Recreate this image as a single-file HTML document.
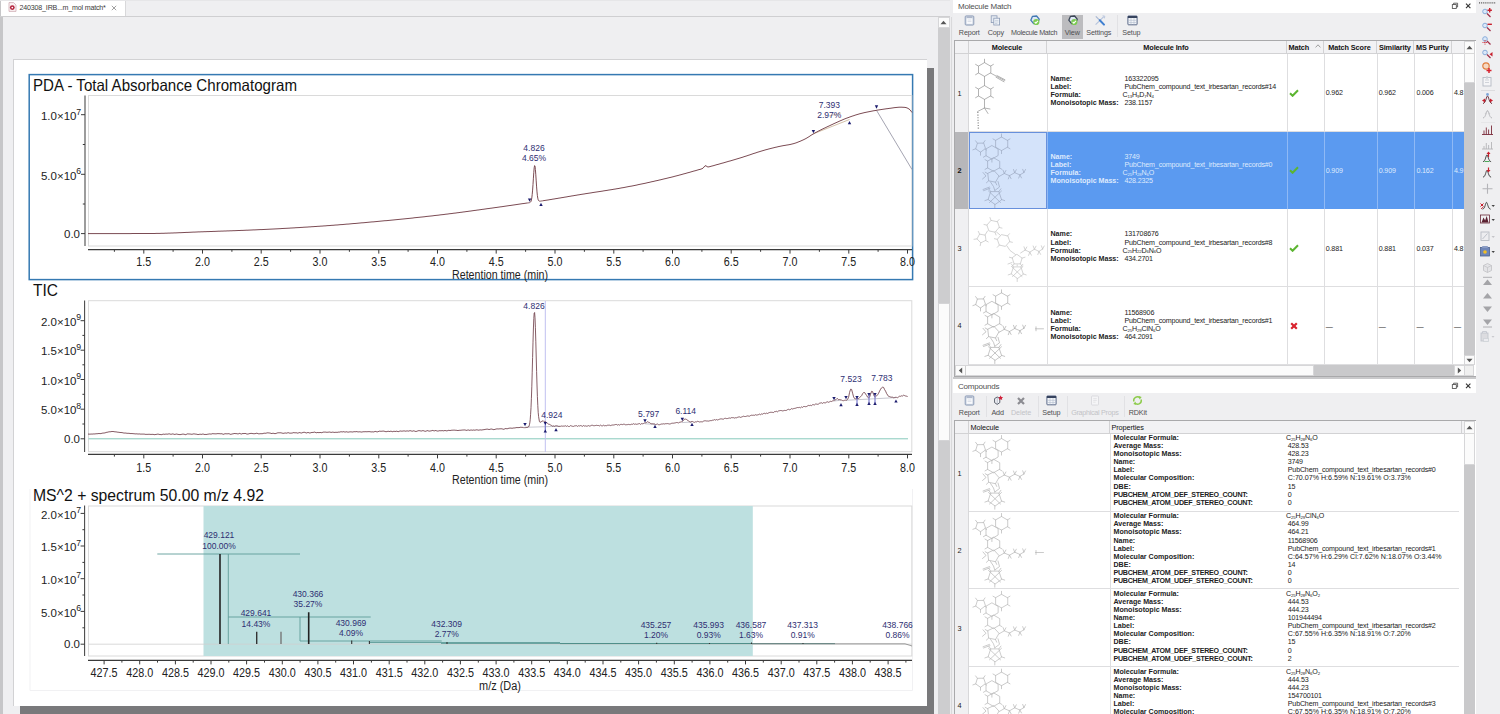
<!DOCTYPE html>
<html lang="en"><head><meta charset="utf-8"><title>Molecule Match</title>
<style>
html,body{margin:0;padding:0;background:#efeff1}
#root{position:relative;width:1500px;height:714px;overflow:hidden;background:#efeff1;font-family:"Liberation Sans",sans-serif;color:#222}
#root div{box-sizing:border-box}
.ptitle{position:absolute;background:#fff;font-size:8px;color:#505050;white-space:nowrap;line-height:9px;letter-spacing:-0.2px}
.tbar{position:absolute;background:#efeff1}
.tl{position:absolute;font-size:7.2px;text-align:center;white-space:nowrap;line-height:8px;letter-spacing:-0.12px}
.tsep{position:absolute;width:1px;background:#e1e1e4}
.tbl{position:absolute;background:#fff;border:1px solid #a9a9ab;overflow:hidden}
.hdr{position:absolute;background:#f2f2f4;border-bottom:1px solid #d2d2d4}
.hc{position:absolute;top:0;height:12.9px;font-size:7.3px;line-height:13.6px;white-space:nowrap;border-right:1px solid #d2d2d4;color:#111;letter-spacing:-0.1px;overflow:hidden}
.b{font-weight:bold}
.row{position:absolute;left:0;width:510px;border-bottom:1px solid #dedee0;background:#fff}
.row.sel{background:#5b9af0;color:#dfeafd;border-bottom-color:#5b9af0}
.rh{position:absolute;left:0;top:0;width:14px;background:#f0f0f2;border-right:1px solid #d8d8da;font-size:7.3px;text-align:left;padding-left:3px;color:#222}
.row.sel .rh{background:#b7b7ba;color:#111}
.molc{position:absolute;left:14px;top:0;width:78px}
.row.sel .molc{background:#d4e3fa;border:1px solid #6790dc;top:0.5px}
.vl{position:absolute;top:0;width:1px;background:#dedee0}
.row.sel .vl{background:#8fb9f5}
.il{position:absolute;font-size:7.1px;line-height:8.6px;white-space:nowrap;letter-spacing:-0.17px}
.il.b{letter-spacing:0}
.il.u{letter-spacing:-0.26px}
.il.w{letter-spacing:0}
.il sub{font-size:4.3px;vertical-align:baseline;position:relative;top:0.8px;letter-spacing:-0.1px}
.sb{position:absolute;background:#c9c9cb}
.sbw{position:absolute;background:#fbfbfb;border:1px solid #d6d6d8}
</style></head>
<body>
<div id="root">
<!-- left document area -->
<div style="position:absolute;left:0;top:0;width:2.6px;height:714px;background:#c6c6c8"></div>
<div style="position:absolute;left:0;top:16px;width:950px;height:1px;background:#cfcfd1"></div>
<div style="position:absolute;left:0;top:0;width:950px;height:1.2px;background:#e6e6e8"></div>
<div style="position:absolute;left:1px;top:1.2px;width:125px;height:15px;background:#fff;border-right:1px solid #d8d8da"></div>
<svg style="position:absolute;left:8px;top:1.5px" width="9" height="10" viewBox="0 0 9 10"><path d="M1 0.6h4.6l2.4 2.4v6.4h-7z" fill="#fbf3f4" stroke="#c9a2aa" stroke-width="0.7"/><circle cx="4.3" cy="5.6" r="2.4" fill="#b3203a"/><circle cx="4.3" cy="5.6" r="0.9" fill="#fff"/></svg>
<div style="position:absolute;left:19.5px;top:4.1px;font-size:7.1px;line-height:8px;color:#3a3a3a;white-space:nowrap;letter-spacing:-0.18px">240308_IRB...m_mol match*</div>
<svg style="position:absolute;left:110.5px;top:4.8px" width="6" height="6" viewBox="0 0 6 6"><path d="M0.8 0.8l4.4 4.4M5.2 0.8l-4.4 4.4" stroke="#888" stroke-width="0.8"/></svg>
<div style="position:absolute;left:20px;top:68px;width:913.5px;height:646px;background:#79797b"></div>
<div style="position:absolute;left:12.6px;top:58.6px;width:914.9px;height:647.4px;background:#fff;border-left:1px solid #d2d2d4;border-top:1px solid #d2d2d4"></div>
<svg id="plots" width="940" height="714" viewBox="0 0 940 714" style="position:absolute;left:0;top:0" font-family="'Liberation Sans',sans-serif">
<rect x="29.2" y="74.6" width="883.4" height="205" fill="#fff" stroke="#3579b2" stroke-width="1.5"/>
<text x="33" y="91.3" font-size="16.5" text-anchor="start" fill="#111" textLength="264" lengthAdjust="spacingAndGlyphs">PDA - Total Absorbance Chromatogram</text>
<rect x="88.5" y="95.5" width="823.3" height="150.5" fill="#fff" stroke="#dadada" stroke-width="1"/>
<path d="M85 95.4V246" stroke="#444" stroke-width="1.05"/>
<path d="M85 144.5h-2.2M85 204h-2.2M85 114.7h-4M85 174.3h-4M85 233.6h-4" stroke="#3a3a3a" stroke-width="1"/>
<text x="81.1" y="120" font-size="11.5" text-anchor="end" fill="#222">1.0×10<tspan font-size="8.7" dy="-5.4" dx="-0.2">7</tspan></text>
<text x="81.1" y="179.5" font-size="11.5" text-anchor="end" fill="#222">5.0×10<tspan font-size="8.7" dy="-5.4" dx="-0.2">6</tspan></text>
<text x="80" y="237.6" font-size="11.5" text-anchor="end" fill="#222" >0.0</text>
<path d="M88 249.6H912" stroke="#3a3a3a" stroke-width="1.2"/>
<path d="M114.4 249.6v2.2M173.1 249.6v2.2M231.9 249.6v2.2M290.6 249.6v2.2M349.4 249.6v2.2M408.1 249.6v2.2M466.9 249.6v2.2M525.6 249.6v2.2M584.4 249.6v2.2M643.1 249.6v2.2M701.9 249.6v2.2M760.6 249.6v2.2M819.4 249.6v2.2M878.1 249.6v2.2M143.8 249.6v4M202.5 249.6v4M261.2 249.6v4M320 249.6v4M378.8 249.6v4M437.5 249.6v4M496.2 249.6v4M555 249.6v4M613.8 249.6v4M672.5 249.6v4M731.2 249.6v4M790 249.6v4M848.8 249.6v4M907.5 249.6v4" stroke="#3a3a3a" stroke-width="1"/>
<text x="143.8" y="266.3" font-size="12.5" text-anchor="middle" fill="#222" textLength="14.9" lengthAdjust="spacingAndGlyphs">1.5</text>
<text x="202.5" y="266.3" font-size="12.5" text-anchor="middle" fill="#222" textLength="14.9" lengthAdjust="spacingAndGlyphs">2.0</text>
<text x="261.2" y="266.3" font-size="12.5" text-anchor="middle" fill="#222" textLength="14.9" lengthAdjust="spacingAndGlyphs">2.5</text>
<text x="320" y="266.3" font-size="12.5" text-anchor="middle" fill="#222" textLength="14.9" lengthAdjust="spacingAndGlyphs">3.0</text>
<text x="378.8" y="266.3" font-size="12.5" text-anchor="middle" fill="#222" textLength="14.9" lengthAdjust="spacingAndGlyphs">3.5</text>
<text x="437.5" y="266.3" font-size="12.5" text-anchor="middle" fill="#222" textLength="14.9" lengthAdjust="spacingAndGlyphs">4.0</text>
<text x="496.2" y="266.3" font-size="12.5" text-anchor="middle" fill="#222" textLength="14.9" lengthAdjust="spacingAndGlyphs">4.5</text>
<text x="555" y="266.3" font-size="12.5" text-anchor="middle" fill="#222" textLength="14.9" lengthAdjust="spacingAndGlyphs">5.0</text>
<text x="613.8" y="266.3" font-size="12.5" text-anchor="middle" fill="#222" textLength="14.9" lengthAdjust="spacingAndGlyphs">5.5</text>
<text x="672.5" y="266.3" font-size="12.5" text-anchor="middle" fill="#222" textLength="14.9" lengthAdjust="spacingAndGlyphs">6.0</text>
<text x="731.2" y="266.3" font-size="12.5" text-anchor="middle" fill="#222" textLength="14.9" lengthAdjust="spacingAndGlyphs">6.5</text>
<text x="790" y="266.3" font-size="12.5" text-anchor="middle" fill="#222" textLength="14.9" lengthAdjust="spacingAndGlyphs">7.0</text>
<text x="848.8" y="266.3" font-size="12.5" text-anchor="middle" fill="#222" textLength="14.9" lengthAdjust="spacingAndGlyphs">7.5</text>
<text x="907.5" y="266.3" font-size="12.5" text-anchor="middle" fill="#222" textLength="14.9" lengthAdjust="spacingAndGlyphs">8.0</text>
<text x="500" y="278.6" font-size="12.5" text-anchor="middle" fill="#222" textLength="96" lengthAdjust="spacingAndGlyphs">Retention time (min)</text>
<path d="M876.5 110.3L912 169.5" stroke="#9a9aa8" stroke-width="0.9" fill="none"/>
<path d="M813.4 133.8L849.5 119.5" stroke="#c8b090" stroke-width="0.8" fill="none"/>
<path d="M88 233.6L89 233.6L90 233.6L91 233.6L92 233.6L93 233.6L94 233.6L95 233.6L96 233.6L97 233.6L98 233.6L99 233.6L100 233.6L101 233.6L102 233.6L103 233.6L104 233.6L105 233.6L106 233.6L107 233.6L108 233.6L109 233.6L110 233.6L111 233.6L112 233.6L113 233.6L114 233.6L115 233.6L116 233.6L117 233.6L118 233.6L119 233.6L120 233.6L121 233.6L122 233.6L123 233.6L124 233.6L125 233.6L126 233.6L127 233.6L128 233.6L129 233.6L130 233.6L131 233.6L132 233.5L133 233.5L134 233.5L135 233.5L136 233.5L137 233.5L138 233.5L139 233.5L140 233.5L141 233.5L142 233.5L143 233.5L144 233.5L145 233.5L146 233.5L147 233.5L148 233.5L149 233.5L150 233.5L151 233.5L152 233.5L153 233.5L154 233.5L155 233.5L156 233.4L157 233.4L158 233.4L159 233.4L160 233.4L161 233.3L162 233.3L163 233.3L164 233.3L165 233.2L166 233.2L167 233.2L168 233.1L169 233.1L170 233.1L171 233L172 233L173 233L174 232.9L175 232.9L176 232.9L177 232.8L178 232.8L179 232.7L180 232.7L181 232.7L182 232.6L183 232.6L184 232.5L185 232.5L186 232.4L187 232.4L188 232.4L189 232.3L190 232.3L191 232.2L192 232.2L193 232.1L194 232.1L195 232.1L196 232L197 232L198 231.9L199 231.9L200 231.9L201 231.8L202 231.8L203 231.8L204 231.7L205 231.7L206 231.7L207 231.6L208 231.6L209 231.6L210 231.5L211 231.5L212 231.5L213 231.4L214 231.4L215 231.4L216 231.3L217 231.3L218 231.2L219 231.2L220 231.2L221 231.1L222 231.1L223 231.1L224 231L225 231L226 231L227 230.9L228 230.9L229 230.9L230 230.8L231 230.8L232 230.8L233 230.7L234 230.7L235 230.7L236 230.6L237 230.6L238 230.5L239 230.5L240 230.5L241 230.4L242 230.4L243 230.4L244 230.3L245 230.3L246 230.2L247 230.2L248 230.2L249 230.1L250 230.1L251 230L252 230L253 229.9L254 229.9L255 229.9L256 229.8L257 229.8L258 229.7L259 229.7L260 229.6L261 229.6L262 229.6L263 229.5L264 229.5L265 229.4L266 229.4L267 229.3L268 229.3L269 229.2L270 229.2L271 229.1L272 229.1L273 229L274 229L275 228.9L276 228.9L277 228.8L278 228.8L279 228.7L280 228.7L281 228.6L282 228.5L283 228.5L284 228.4L285 228.4L286 228.3L287 228.3L288 228.2L289 228.2L290 228.1L291 228L292 228L293 227.9L294 227.9L295 227.8L296 227.7L297 227.7L298 227.6L299 227.6L300 227.5L301 227.4L302 227.4L303 227.3L304 227.2L305 227.2L306 227.1L307 227.1L308 227L309 226.9L310 226.9L311 226.8L312 226.7L313 226.7L314 226.6L315 226.5L316 226.5L317 226.4L318 226.3L319 226.3L320 226.2L321 226.1L322 226.1L323 226L324 225.9L325 225.9L326 225.8L327 225.7L328 225.6L329 225.6L330 225.5L331 225.4L332 225.3L333 225.3L334 225.2L335 225.1L336 225L337 225L338 224.9L339 224.8L340 224.7L341 224.6L342 224.6L343 224.5L344 224.4L345 224.3L346 224.2L347 224.1L348 224.1L349 224L350 223.9L351 223.8L352 223.7L353 223.6L354 223.5L355 223.5L356 223.4L357 223.3L358 223.2L359 223.1L360 223L361 222.9L362 222.8L363 222.8L364 222.7L365 222.6L366 222.5L367 222.4L368 222.3L369 222.2L370 222.1L371 222L372 221.9L373 221.9L374 221.8L375 221.7L376 221.6L377 221.5L378 221.4L379 221.3L380 221.2L381 221.1L382 221L383 220.9L384 220.8L385 220.7L386 220.7L387 220.6L388 220.5L389 220.4L390 220.3L391 220.2L392 220.1L393 220L394 219.9L395 219.8L396 219.7L397 219.6L398 219.5L399 219.4L400 219.3L401 219.2L402 219.1L403 219L404 218.9L405 218.8L406 218.7L407 218.6L408 218.5L409 218.4L410 218.3L411 218.2L412 218.1L413 218L414 217.8L415 217.7L416 217.6L417 217.5L418 217.4L419 217.3L420 217.2L421 217.1L422 217L423 216.9L424 216.8L425 216.7L426 216.5L427 216.4L428 216.3L429 216.2L430 216.1L431 216L432 215.9L433 215.8L434 215.6L435 215.5L436 215.4L437 215.3L438 215.2L439 215.1L440 214.9L441 214.8L442 214.7L443 214.6L444 214.5L445 214.3L446 214.2L447 214.1L448 214L449 213.8L450 213.7L451 213.6L452 213.5L453 213.3L454 213.2L455 213.1L456 213L457 212.8L458 212.7L459 212.6L460 212.4L461 212.3L462 212.2L463 212L464 211.9L465 211.8L466 211.6L467 211.5L468 211.4L469 211.2L470 211.1L471 211L472 210.8L473 210.7L474 210.5L475 210.4L476 210.3L477 210.1L478 210L479 209.9L480 209.7L481 209.6L482 209.4L483 209.3L484 209.2L485 209L486 208.9L487 208.7L488 208.6L489 208.5L490 208.3L491 208.2L492 208.1L493 207.9L494 207.8L495 207.6L496 207.5L497 207.4L498 207.2L499 207.1L500 206.9L501 206.8L502 206.7L503 206.5L504 206.4L505 206.2L506 206.1L507 205.9L508 205.8L509 205.6L510 205.5L511 205.4L512 205.2L513 205.1L514 204.9L515 204.8L516 204.6L517 204.5L518 204.3L519 204.2L520 204L521 203.9L522 203.7L523 203.6L524 203.5L525 203.3L526 203.2L527 203L527.4 203L527.8 202.9L528.2 202.9L528.6 202.8L529 202.7L529.4 202.7L529.8 202.5L530.2 202.3L530.6 202L531 201.3L531.4 200L531.8 197.9L532.2 194.6L532.6 190.1L533 184.5L533.4 178.2L533.8 172.3L534.2 167.7L534.6 165.6L535 166.2L535.4 169.6L535.8 174.8L536.2 180.9L536.6 186.9L537 191.9L537.4 195.7L537.8 198.2L538.2 199.8L538.6 200.6L539 201L539.4 201.1L539.8 201.2L540.2 201.2L540.6 201.1L541 201L541.4 201L541.8 200.9L542.2 200.9L542.6 200.8L543 200.7L544 200.6L545 200.4L546 200.3L547 200.1L548 200L549 199.8L550 199.6L551 199.5L552 199.3L553 199.1L554 199L555 198.8L556 198.6L557 198.5L558 198.3L559 198.1L560 198L561 197.8L562 197.6L563 197.5L564 197.3L565 197.1L566 197L567 196.8L568 196.6L569 196.4L570 196.3L571 196.1L572 195.9L573 195.8L574 195.6L575 195.4L576 195.3L577 195.1L578 194.9L579 194.8L580 194.6L581 194.4L582 194.3L583 194.1L584 194L585 193.8L586 193.6L587 193.5L588 193.3L589 193.2L590 193L591 192.9L592 192.7L593 192.5L594 192.4L595 192.2L596 192.1L597 191.9L598 191.8L599 191.6L600 191.5L601 191.3L602 191.2L603 191L604 190.8L605 190.7L606 190.5L607 190.4L608 190.2L609 190L610 189.9L611 189.7L612 189.6L613 189.4L614 189.2L615 189.1L616 188.9L617 188.7L618 188.6L619 188.4L620 188.2L621 188L622 187.8L623 187.7L624 187.5L625 187.3L626 187.1L627 186.9L628 186.7L629 186.5L630 186.3L631 186.2L632 186L633 185.8L634 185.6L635 185.4L636 185.2L637 185L638 184.7L639 184.5L640 184.3L641 184.1L642 183.9L643 183.7L644 183.5L645 183.3L646 183.1L647 182.8L648 182.6L649 182.4L650 182.2L651 181.9L652 181.7L653 181.5L654 181.3L655 181L656 180.8L657 180.6L658 180.4L659 180.1L660 179.9L661 179.7L662 179.4L663 179.2L664 178.9L665 178.7L666 178.5L667 178.2L668 178L669 177.7L670 177.5L671 177.3L672 177L673 176.8L674 176.5L675 176.2L676 176L677 175.7L678 175.5L679 175.2L680 174.9L681 174.7L682 174.4L683 174.1L684 173.8L685 173.6L686 173.3L687 173L688 172.7L689 172.5L690 172.2L691 171.9L692 171.6L693 171.3L694 171L695 170.8L696 170.5L697 170.2L698 169.9L699 169.6L700 169.4L701 169.1L702 168.7L703 168.2L704 167L705 165.8L706 165.8L707 166.6L708 167L709 166.8L710 166.6L711 166.3L712 166L713 165.8L714 165.5L715 165.2L716 164.9L717 164.6L718 164.4L719 164.1L720 163.8L721 163.5L722 163.2L723 163L724 162.7L725 162.4L726 162.1L727 161.8L728 161.5L729 161.2L730 161L731 160.7L732 160.4L733 160.1L734 159.8L735 159.5L736 159.2L737 158.9L738 158.6L739 158.3L740 158L741 157.7L742 157.4L743 157.1L744 156.7L745 156.4L746 156.1L747 155.8L748 155.4L749 155.1L750 154.8L751 154.4L752 154.1L753 153.7L754 153.4L755 153.1L756 152.8L757 152.4L758 152.1L759 151.8L760 151.5L761 151.2L762 150.9L763 150.6L764 150.3L765 150L766 149.7L767 149.5L768 149.2L769 148.9L770 148.7L771 148.4L772 148.2L773 147.9L774 147.7L775 147.4L776 147.2L777 147L778 146.7L779 146.5L780 146.3L781 146.1L782 145.9L783 145.7L784 145.5L785 145.4L786 145.2L787 145L788 144.9L789 144.7L790 144.5L791 144.3L792 144L793 143.8L794 143.5L795 143.2L796 142.9L797 142.5L798 142.1L799 141.7L800 141.3L801 140.9L802 140.4L803 140L804 139.5L805 139L806 138.5L807 137.9L808 137.3L809 136.7L810 136L811 135.3L812 134.7L813 134.1L814 133.5L815 132.9L816 132.4L817 131.9L818 131.3L819 130.8L820 130.3L821 129.8L822 129.3L823 128.8L824 128.3L825 127.9L826 127.4L827 126.9L828 126.4L829 126L830 125.5L831 125L832 124.6L833 124.1L834 123.6L835 123.2L836 122.7L837 122.3L838 121.8L839 121.4L840 120.9L841 120.5L842 120.1L843 119.6L844 119.2L845 118.8L846 118.4L847 118L848 117.7L849 117.3L850 116.9L851 116.6L852 116.2L853 115.9L854 115.6L855 115.2L856 114.9L857 114.6L858 114.3L859 114L860 113.7L861 113.5L862 113.2L863 113L864 112.7L865 112.5L866 112.3L867 112.1L868 111.9L869 111.7L870 111.5L871 111.3L872 111.1L873 110.9L874 110.7L875 110.6L876 110.4L877 110.2L878 110L879 109.9L880 109.7L881 109.6L882 109.4L883 109.3L884 109.1L885 109L886 108.8L887 108.7L888 108.6L889 108.4L890 108.3L891 108.2L892 108L893 107.9L894 107.7L895 107.6L896 107.5L897 107.4L898 107.3L899 107.2L900 107.2L901 107.2L902 107.2L903 107.3L904 107.3L905 107.4L906 107.6L907 107.9L908 108.4L909 109L910 109.8L911 111.1L912 112.5" stroke="#74414a" stroke-width="0.95" fill="none" stroke-linejoin="round"/>
<path d="M841 113L829 116" stroke="#c8b090" stroke-width="0.7" fill="none"/>
<path d="M527.9 198.5h3.4L529.6 201.8z" fill="#1b1b6e"/>
<path d="M811.7 129.9h3.4L813.4 133.2z" fill="#1b1b6e"/>
<path d="M874.8 105.3h3.4L876.5 108.7z" fill="#1b1b6e"/>
<path d="M539.3 206h3.4L541 202.7z" fill="#1b1b6e"/>
<path d="M847.8 124.2h3.4L849.5 120.9z" fill="#1b1b6e"/>
<text x="534" y="151" font-size="8.5" text-anchor="middle" fill="#2e2e72" >4.826</text>
<text x="534" y="160.8" font-size="8.5" text-anchor="middle" fill="#2e2e72" >4.65%</text>
<text x="829.3" y="108.2" font-size="8.5" text-anchor="middle" fill="#2e2e72" >7.393</text>
<text x="829.3" y="118" font-size="8.5" text-anchor="middle" fill="#2e2e72" >2.97%</text>
<text x="33" y="296.2" font-size="16.5" text-anchor="start" fill="#111" textLength="25" lengthAdjust="spacingAndGlyphs">TIC</text>
<rect x="88.5" y="300.7" width="823.3" height="151" fill="#fff" stroke="#dadada" stroke-width="1"/>
<path d="M84.6 300.4V452" stroke="#444" stroke-width="1.05"/>
<path d="M84.6 335.4h-2.2M84.6 364.8h-2.2M84.6 394.3h-2.2M84.6 424h-2.2M84.6 320.7h-4M84.6 350.2h-4M84.6 379.5h-4M84.6 409.2h-4M84.6 438.8h-4" stroke="#3a3a3a" stroke-width="1"/>
<text x="81.1" y="325.8" font-size="11.5" text-anchor="end" fill="#222">2.0×10<tspan font-size="8.7" dy="-5.4" dx="-0.2">9</tspan></text>
<text x="81.1" y="355.3" font-size="11.5" text-anchor="end" fill="#222">1.5×10<tspan font-size="8.7" dy="-5.4" dx="-0.2">9</tspan></text>
<text x="81.1" y="384.6" font-size="11.5" text-anchor="end" fill="#222">1.0×10<tspan font-size="8.7" dy="-5.4" dx="-0.2">9</tspan></text>
<text x="81.1" y="414.3" font-size="11.5" text-anchor="end" fill="#222">5.0×10<tspan font-size="8.7" dy="-5.4" dx="-0.2">8</tspan></text>
<text x="80" y="442.8" font-size="11.5" text-anchor="end" fill="#222" >0.0</text>
<path d="M88 454.4H912" stroke="#3a3a3a" stroke-width="1.2"/>
<path d="M114.4 454.4v2.2M173.1 454.4v2.2M231.9 454.4v2.2M290.6 454.4v2.2M349.4 454.4v2.2M408.1 454.4v2.2M466.9 454.4v2.2M525.6 454.4v2.2M584.4 454.4v2.2M643.1 454.4v2.2M701.9 454.4v2.2M760.6 454.4v2.2M819.4 454.4v2.2M878.1 454.4v2.2M143.8 454.4v4M202.5 454.4v4M261.2 454.4v4M320 454.4v4M378.8 454.4v4M437.5 454.4v4M496.2 454.4v4M555 454.4v4M613.8 454.4v4M672.5 454.4v4M731.2 454.4v4M790 454.4v4M848.8 454.4v4M907.5 454.4v4" stroke="#3a3a3a" stroke-width="1"/>
<text x="143.8" y="471.7" font-size="12.5" text-anchor="middle" fill="#222" textLength="14.9" lengthAdjust="spacingAndGlyphs">1.5</text>
<text x="202.5" y="471.7" font-size="12.5" text-anchor="middle" fill="#222" textLength="14.9" lengthAdjust="spacingAndGlyphs">2.0</text>
<text x="261.2" y="471.7" font-size="12.5" text-anchor="middle" fill="#222" textLength="14.9" lengthAdjust="spacingAndGlyphs">2.5</text>
<text x="320" y="471.7" font-size="12.5" text-anchor="middle" fill="#222" textLength="14.9" lengthAdjust="spacingAndGlyphs">3.0</text>
<text x="378.8" y="471.7" font-size="12.5" text-anchor="middle" fill="#222" textLength="14.9" lengthAdjust="spacingAndGlyphs">3.5</text>
<text x="437.5" y="471.7" font-size="12.5" text-anchor="middle" fill="#222" textLength="14.9" lengthAdjust="spacingAndGlyphs">4.0</text>
<text x="496.2" y="471.7" font-size="12.5" text-anchor="middle" fill="#222" textLength="14.9" lengthAdjust="spacingAndGlyphs">4.5</text>
<text x="555" y="471.7" font-size="12.5" text-anchor="middle" fill="#222" textLength="14.9" lengthAdjust="spacingAndGlyphs">5.0</text>
<text x="613.8" y="471.7" font-size="12.5" text-anchor="middle" fill="#222" textLength="14.9" lengthAdjust="spacingAndGlyphs">5.5</text>
<text x="672.5" y="471.7" font-size="12.5" text-anchor="middle" fill="#222" textLength="14.9" lengthAdjust="spacingAndGlyphs">6.0</text>
<text x="731.2" y="471.7" font-size="12.5" text-anchor="middle" fill="#222" textLength="14.9" lengthAdjust="spacingAndGlyphs">6.5</text>
<text x="790" y="471.7" font-size="12.5" text-anchor="middle" fill="#222" textLength="14.9" lengthAdjust="spacingAndGlyphs">7.0</text>
<text x="848.8" y="471.7" font-size="12.5" text-anchor="middle" fill="#222" textLength="14.9" lengthAdjust="spacingAndGlyphs">7.5</text>
<text x="907.5" y="471.7" font-size="12.5" text-anchor="middle" fill="#222" textLength="14.9" lengthAdjust="spacingAndGlyphs">8.0</text>
<text x="500" y="484" font-size="12.5" text-anchor="middle" fill="#222" textLength="96" lengthAdjust="spacingAndGlyphs">Retention time (min)</text>
<path d="M88.5 438.8H908" stroke="#86c9bb" stroke-width="1"/>
<path d="M545.3 301V452" stroke="#c0c0f0" stroke-width="1"/>
<path d="M525 427.3L560 426.3M645 423.8L655 424.4M682 422.6L692 422M834 401L841 400.2M846 400.3L896 397.6" stroke="#b9b9c4" stroke-width="0.8" fill="none"/>
<path d="M88 434.1L89 434.1L90 434.2L91 434L92 434.1L93 434L94 433.9L95 434L96 433.7L97 433.8L98 433.6L99 433.5L100 433.6L101 433.6L102 433.2L103 433.1L104 433L105 432.9L106 432.5L107 432.2L108 432.2L109 431.7L110 431.9L111 431.6L112 431.5L113 431.5L114 431.6L115 431.9L116 431.8L117 432.1L118 432.2L119 432.3L120 432.5L121 432.5L122 432.6L123 432.8L124 433.1L125 433L126 433.1L127 433.3L128 433.3L129 433.3L130 433.5L131 433.6L132 433.5L133 433.7L134 433.7L135 433.9L136 433.9L137 433.8L138 434.1L139 433.9L140 434L141 434.2L142 434L143 434.2L144 434L145 434.3L146 434.4L147 434.3L148 434.4L149 434.2L150 434.4L151 434.4L152 434.4L153 434.3L154 434.6L155 434.7L156 434.3L157 434.4L158 433.9L159 434.5L160 434.4L161 434.7L162 434.6L163 434.1L164 434.2L165 434.4L166 433.9L167 434.3L168 434L169 433.9L170 433.9L171 434.5L172 433.9L173 434L174 434.2L175 434.6L176 433.9L177 434.2L178 434.3L179 434.6L180 434.5L181 434.6L182 434.1L183 434.2L184 434.1L185 434.6L186 434.7L187 433.9L188 433.9L189 434L190 434L191 434.2L192 434.3L193 434L194 433.8L195 434.1L196 434.1L197 434.3L198 434.6L199 434.4L200 434.2L201 434.3L202 434.4L203 433.8L204 434.5L205 434.4L206 434.5L207 434.4L208 434.1L209 434.1L210 433.8L211 434.3L212 433.7L213 433.7L214 433.8L215 433.8L216 433.9L217 433.7L218 433.6L219 433.7L220 433.7L221 433.9L222 433.6L223 434.4L224 434.1L225 433.7L226 433.8L227 433.8L228 433.8L229 433.6L230 434.2L231 434.4L232 433.9L233 433.9L234 433.5L235 433.5L236 433.7L237 433.6L238 434.1L239 433.5L240 433.3L241 434.2L242 433.8L243 433.4L244 433.7L245 433.3L246 433.7L247 434.1L248 434L249 433.8L250 433.4L251 433.5L252 433.3L253 433.8L254 433.6L255 433.8L256 433.3L257 433.2L258 433.7L259 433.9L260 433.7L261 433.7L262 433.7L263 433.6L264 433.1L265 433.3L266 433.2L267 432.9L268 432.8L269 433L270 433L271 433.4L272 433.6L273 433.1L274 433.5L275 433.6L276 433.5L277 433L278 432.8L279 432.8L280 432.8L281 432.8L282 433.1L283 433.3L284 433.3L285 432.9L286 433.1L287 433.2L288 432.5L289 433L290 433.2L291 433.1L292 433.1L293 432.8L294 432.5L295 433L296 432.6L297 433L298 433.2L299 432.6L300 432.6L301 433.1L302 432.9L303 432.4L304 432.3L305 432.3L306 433L307 432.9L308 432.3L309 432.9L310 433L311 432.7L312 432.4L313 432.5L314 432.2L315 432L316 432.9L317 432.6L318 432.4L319 432.8L320 432.3L321 432.7L322 432.7L323 432.1L324 432.1L325 432.1L326 432.1L327 432.4L328 432.1L329 432.2L330 431.9L331 432.6L332 432.1L333 432.2L334 432.3L335 432.5L336 432.1L337 432.5L338 432.1L339 432.1L340 432.1L341 431.6L342 432L343 431.8L344 431.6L345 432.3L346 431.7L347 431.9L348 432.2L349 432L350 431.8L351 431.9L352 431.9L353 432.1L354 431.5L355 431.9L356 431.6L357 431.6L358 432L359 431.8L360 431.8L361 432L362 432.1L363 431.7L364 431.8L365 431.7L366 431.7L367 431.8L368 431.6L369 431.7L370 431.6L371 432L372 431.8L373 431.9L374 432L375 431.3L376 431.6L377 431.9L378 431.8L379 431.2L380 431.1L381 431.4L382 431.1L383 431.2L384 431L385 431.6L386 431.6L387 431.7L388 431.1L389 431.5L390 431.5L391 431L392 431.7L393 431.7L394 431L395 431.7L396 431.2L397 431.2L398 431.7L399 431.5L400 430.9L401 431.1L402 431.2L403 431L404 430.9L405 431L406 431.3L407 430.7L408 431.2L409 431L410 430.6L411 430.9L412 431.2L413 431.1L414 430.6L415 431.5L416 431.3L417 431.4L418 430.6L419 430.8L420 430.6L421 431.2L422 430.8L423 430.6L424 430.9L425 431.3L426 431.2L427 430.7L428 430.6L429 431.3L430 430.9L431 431L432 430.5L433 430.4L434 431L435 430.7L436 430.4L437 431.2L438 430.9L439 431L440 430.4L441 431.1L442 430.3L443 431L444 430.7L445 430.5L446 430.7L447 431L448 430.4L449 430.3L450 430.6L451 430.3L452 430.2L453 430.2L454 430.1L455 430.2L456 430.3L457 430.3L458 430.7L459 430.2L460 430.4L461 430.1L462 430.2L463 429.9L464 430.1L465 429.8L466 430.4L467 430.3L468 429.9L469 430.1L470 430.5L471 429.7L472 430.4L473 430L474 430L475 430.3L476 429.8L477 429.9L478 430L479 430.3L480 429.7L481 430.1L482 429.9L483 429.8L484 429.6L485 429.5L486 429.2L487 429.2L488 429.1L489 429.7L490 429.2L491 429.1L492 429L493 429.6L494 429.6L495 429.4L496 429L497 428.9L498 428.9L499 429L500 428.7L501 428.9L502 428.7L503 429.3L504 429.2L505 428.8L506 428.4L507 429L508 428.4L509 428.3L510 428L511 428.2L512 428.2L513 428.2L514 427.8L515 428.1L516 427.5L517 427.7L518 427.5L519 427.7L520 427.3L521 427.2L522 427.4L523 427.3L523.4 427.6L523.8 427.5L524.2 427.7L524.6 427.6L525 427.6L525.4 427.7L525.8 427.3L526.2 427.2L526.6 427.7L527 427L527.4 427.4L527.8 427.2L528.2 426.5L528.6 426.9L529 426.2L529.4 424.8L529.8 422.9L530.2 419.8L530.6 414.3L531 407.7L531.4 398.3L531.8 386.8L532.2 372.8L532.6 357.6L533 342.2L533.4 329L533.8 318.5L534.2 313L534.6 312.5L535 317.6L535.4 327.7L535.8 341.2L536.2 356L536.6 371.6L537 385L537.4 396.6L537.8 405.6L538.2 412.3L538.6 416.6L539 419L539.4 421.4L539.8 422.1L540.2 422.2L540.6 422.2L541 422.2L541.4 421.4L541.8 421.8L542.2 421.2L542.6 420.8L543 420.9L543.4 421.3L543.8 420.8L544.2 421.3L544.6 421.7L545 421.4L545.4 421.5L545.8 421.8L546.2 422.3L546.6 422.7L547.6 423.4L548.6 424.2L549.6 424.4L550.6 425L551.6 425.5L552.6 426.2L553.6 425.9L554.6 426.3L555.6 425.8L556.6 425.8L557.6 426L558.6 426.4L559.6 426.4L560.6 426.3L561.6 426L562.6 426.2L563.6 426.1L564.6 426.1L565.6 425.8L566.6 426.4L567.6 425.8L568.6 426.5L569.6 426.4L570.6 425.6L571.6 426L572.6 426.3L573.6 426.4L574.6 425.9L575.6 425.8L576.6 425.7L577.6 426.4L578.6 425.7L579.6 426L580.6 425.6L581.6 425.9L582.6 426.3L583.6 425.5L584.6 426.1L585.6 425.9L586.6 426.2L587.6 426L588.6 425.6L589.6 426.1L590.6 425.8L591.6 425.3L592.6 425.3L593.6 425.7L594.6 425.7L595.6 425.5L596.6 425.3L597.6 425.5L598.6 425.5L599.6 425.9L600.6 425.1L601.6 425.8L602.6 425.8L603.6 425.2L604.6 425.8L605.6 425.6L606.6 425.7L607.6 425.2L608.6 425.2L609.6 425.2L610.6 425.6L611.6 425.2L612.6 425L613.6 425L614.6 424.8L615.6 424.5L616.6 424.5L617.6 425.1L618.6 424.6L619.6 425.1L620.6 424.4L621.6 424.4L622.6 424.6L623.6 424.2L624.6 424.3L625.6 424.8L626.6 424.7L627.6 424.6L628.6 424.4L629.6 424.6L630.6 424.6L631.6 424.2L632.6 424.3L633.6 423.7L634.6 424.3L635.6 424L636.6 424.3L637.6 424.1L638.6 423.8L639.6 423.6L640.6 424.4L641.6 423.6L642.6 423.8L643.6 423.5L644.6 423L645.6 422.8L646.6 422.5L647.6 421.7L648.6 422.3L649.6 422.6L650.6 423.5L651.6 423.8L652.6 423.8L653.6 423.9L654.6 424L655.6 424.6L656.6 424.3L657.6 424L658.6 424.7L659.6 424.7L660.6 424.3L661.6 424L662.6 424L663.6 423.8L664.6 424L665.6 423.7L666.6 423.7L667.6 423.6L668.6 423.8L669.6 424L670.6 423.8L671.6 423.3L672.6 423.2L673.6 423.2L674.6 423L675.6 422.8L676.6 422.5L677.6 422.6L678.6 423.1L679.6 422.1L680.6 422.1L681.6 421.8L682.6 421.3L683.6 419.9L684.6 419.3L685.6 419.1L686.6 419.5L687.6 420.1L688.6 421.2L689.6 421.7L690.6 422.1L691.6 421.5L692.6 421.5L693.6 422.1L694.6 422.3L695.6 421.8L696.6 421.9L697.6 421.3L698.6 421.6L699.6 422L700.6 421.8L701.6 421.8L702.6 421.8L703.6 421.1L704.6 420.8L705.6 420.8L706.6 421L707.6 421L708.6 421.1L709.6 420.8L710.6 420.6L711.6 420.6L712.6 420.2L713.6 420.1L714.6 419.6L715.6 420.1L716.6 419.5L717.6 420L718.6 419.6L719.6 419.2L720.6 418.9L721.6 418.9L722.6 419.1L723.6 419.1L724.6 418.4L725.6 418.3L726.6 418.6L727.6 418.5L728.6 418.2L729.6 418L730.6 418.2L731.6 417.6L732.6 417.7L733.6 417.7L734.6 418.1L735.6 417.7L736.6 417.8L737.6 417.3L738.6 417L739.6 416.9L740.6 417.4L741.6 417L742.6 416.6L743.6 416.2L744.6 416.5L745.6 416.5L746.6 416.2L747.6 415.9L748.6 416.1L749.6 416.2L750.6 415.5L751.6 415.2L752.6 415.3L753.6 415.2L754.6 415.3L755.6 414.7L756.6 415.1L757.6 414.9L758.6 414.6L759.6 414.1L760.6 414.7L761.6 413.9L762.6 414.2L763.6 413.5L764.6 413.3L765.6 413.7L766.6 413.1L767.6 413.5L768.6 412.9L769.6 412.5L770.6 412.3L771.6 412.3L772.6 412.4L773.6 412.5L774.6 411.6L775.6 411.6L776.6 411.3L777.6 411.8L778.6 410.9L779.6 410.7L780.6 410.5L781.6 410.6L782.6 410.9L783.6 410.7L784.6 410.4L785.6 410.5L786.6 410.3L787.6 409.6L788.6 409.3L789.6 409.8L790.6 409.4L791.6 408.6L792.6 409L793.6 408.6L794.6 408.4L795.6 408.2L796.6 407.8L797.6 407.5L798.6 407.6L799.6 407.4L800.6 407.8L801.6 406.9L802.6 407.4L803.6 406.5L804.6 406.5L805.6 406.7L806.6 406.5L807.6 405.9L808.6 405.4L809.6 405.6L810.6 405.3L811.6 405.6L812.6 404.7L813.6 404.7L814.6 404.9L815.6 404L816.6 404.1L817.6 404.3L818.6 404L819.6 403.2L820.6 403L821.6 402.8L822.6 403.4L823.6 402.6L824.6 402.8L825.6 402.8L826.6 402.1L827.6 401.8L828.6 402.3L829.6 401.8L830.6 401.3L831.6 401.5L832.6 400.9L833.6 400.7L834.6 400.1L835.6 399.9L836.6 398.8L837.6 398.6L838.6 399.8L839.6 399.5L840.6 399.8L841.6 400.1L842.6 400.6L843.6 400.7L844.6 400.3L845.6 400.2L846.6 400.2L847.6 399.4L848.6 397.2L849.6 392.3L850.6 389.2L851.6 389.4L852.6 393.2L853.6 396.9L854.6 398.6L855.6 398.8L856.6 398.7L857.6 398.6L858.6 398.7L859.6 397.5L860.6 396.7L861.6 395.7L862.6 393.7L863.6 392.5L864.6 392.5L865.6 394.1L866.6 395.4L867.6 397.2L868.6 397.7L869.6 397.2L870.6 394.2L871.6 391.3L872.6 391.6L873.6 394.7L874.6 396.8L875.6 396.8L876.6 395.9L877.6 394.8L878.6 393.2L879.6 391.1L880.6 389.2L881.6 387.8L882.6 387.2L883.6 387.4L884.6 389.6L885.6 391.2L886.6 393.5L887.6 395L888.6 396.4L889.6 396.6L890.6 397L891.6 397.2L892.6 397.2L893.6 397.8L894.6 397.6L895.6 397.3L896.6 397.4L897.6 397.7L898.6 396.9L899.6 396.2L900.6 396.3L901.6 395.8L902.6 396L903.6 395.2L904.6 395.6L905.6 396L906.6 396.2L907.6 396.5" stroke="#70404a" stroke-width="0.85" fill="none" stroke-linejoin="round"/>
<path d="M545.3 423V431M857 398V404M869 395V403M875 395V403" stroke="#7474cc" stroke-width="1.1"/>
<path d="M523.3 423.1h3.4L525 426.3z" fill="#1b1b6e"/>
<path d="M543.6 421.9h3.4L545.3 425.1z" fill="#1b1b6e"/>
<path d="M643.3 419.2h3.4L645 422.4z" fill="#1b1b6e"/>
<path d="M680.6 417.8h3.4L682.3 421z" fill="#1b1b6e"/>
<path d="M832.3 397.1h3.4L834 400.3z" fill="#1b1b6e"/>
<path d="M844.3 396.1h3.4L846 399.3z" fill="#1b1b6e"/>
<path d="M855.3 395.9h3.4L857 399.1z" fill="#1b1b6e"/>
<path d="M867.3 392.9h3.4L869 396.1z" fill="#1b1b6e"/>
<path d="M873.3 392.9h3.4L875 396.1z" fill="#1b1b6e"/>
<path d="M543.6 432.6h3.4L545.3 429.4z" fill="#1b1b6e"/>
<path d="M554.3 431.2h3.4L556 428z" fill="#1b1b6e"/>
<path d="M653.3 428h3.4L655 424.8z" fill="#1b1b6e"/>
<path d="M690.3 426h3.4L692 422.8z" fill="#1b1b6e"/>
<path d="M839.3 406.3h3.4L841 403.1z" fill="#1b1b6e"/>
<path d="M855.3 405.9h3.4L857 402.7z" fill="#1b1b6e"/>
<path d="M867.3 404.9h3.4L869 401.7z" fill="#1b1b6e"/>
<path d="M873.3 404.9h3.4L875 401.7z" fill="#1b1b6e"/>
<path d="M894.3 402.6h3.4L896 399.4z" fill="#1b1b6e"/>
<text x="534" y="309.3" font-size="8.5" text-anchor="middle" fill="#2e2e72" >4.826</text>
<text x="551.8" y="418" font-size="8.5" text-anchor="middle" fill="#2e2e72" >4.924</text>
<text x="648.7" y="416.6" font-size="8.5" text-anchor="middle" fill="#2e2e72" >5.797</text>
<text x="685.7" y="414.3" font-size="8.5" text-anchor="middle" fill="#2e2e72" >6.114</text>
<text x="851" y="382" font-size="8.5" text-anchor="middle" fill="#2e2e72" >7.523</text>
<text x="881.8" y="381.3" font-size="8.5" text-anchor="middle" fill="#2e2e72" >7.783</text>
<path d="M30 489V690.5H912.5V489" fill="none" stroke="#f1f1f3" stroke-width="1"/>
<text x="33" y="500.8" font-size="16.5" text-anchor="start" fill="#111" textLength="231" lengthAdjust="spacingAndGlyphs">MS^2 + spectrum 50.00 m/z 4.92</text>
<rect x="88.5" y="506" width="823.3" height="150" fill="#fff" stroke="#dadada" stroke-width="1"/>
<rect x="203.5" y="506" width="549.3" height="150" fill="#bde0e0"/>
<path d="M84.6 505.4V656" stroke="#444" stroke-width="1.05"/>
<path d="M84.6 529.7h-2.2M84.6 562.4h-2.2M84.6 595h-2.2M84.6 627.8h-2.2M84.6 513.4h-4M84.6 546h-4M84.6 578.7h-4M84.6 611.4h-4M84.6 644.2h-4" stroke="#3a3a3a" stroke-width="1"/>
<text x="81.1" y="518.5" font-size="11.5" text-anchor="end" fill="#222">2.0×10<tspan font-size="8.7" dy="-5.4" dx="-0.2">7</tspan></text>
<text x="81.1" y="551" font-size="11.5" text-anchor="end" fill="#222">1.5×10<tspan font-size="8.7" dy="-5.4" dx="-0.2">7</tspan></text>
<text x="81.1" y="583.8" font-size="11.5" text-anchor="end" fill="#222">1.0×10<tspan font-size="8.7" dy="-5.4" dx="-0.2">7</tspan></text>
<text x="81.1" y="616.5" font-size="11.5" text-anchor="end" fill="#222">5.0×10<tspan font-size="8.7" dy="-5.4" dx="-0.2">6</tspan></text>
<text x="80" y="648.2" font-size="11.5" text-anchor="end" fill="#222" >0.0</text>
<path d="M88 660.4H912" stroke="#3a3a3a" stroke-width="1.2"/>
<path d="M121.9 660.4v2.2M157.5 660.4v2.2M193.2 660.4v2.2M228.8 660.4v2.2M264.5 660.4v2.2M300.1 660.4v2.2M335.7 660.4v2.2M371.4 660.4v2.2M407 660.4v2.2M442.6 660.4v2.2M478.3 660.4v2.2M513.9 660.4v2.2M549.5 660.4v2.2M585.2 660.4v2.2M620.8 660.4v2.2M656.4 660.4v2.2M692.1 660.4v2.2M727.7 660.4v2.2M763.3 660.4v2.2M799 660.4v2.2M834.6 660.4v2.2M870.2 660.4v2.2M905.9 660.4v2.2M104.1 660.4v4M139.7 660.4v4M175.4 660.4v4M211 660.4v4M246.6 660.4v4M282.3 660.4v4M317.9 660.4v4M353.5 660.4v4M389.2 660.4v4M424.8 660.4v4M460.4 660.4v4M496.1 660.4v4M531.7 660.4v4M567.3 660.4v4M603 660.4v4M638.6 660.4v4M674.3 660.4v4M709.9 660.4v4M745.5 660.4v4M781.2 660.4v4M816.8 660.4v4M852.4 660.4v4M888.1 660.4v4" stroke="#3a3a3a" stroke-width="1"/>
<text x="104.1" y="677.1" font-size="12.5" text-anchor="middle" fill="#222" textLength="27" lengthAdjust="spacingAndGlyphs">427.5</text>
<text x="139.7" y="677.1" font-size="12.5" text-anchor="middle" fill="#222" textLength="27" lengthAdjust="spacingAndGlyphs">428.0</text>
<text x="175.4" y="677.1" font-size="12.5" text-anchor="middle" fill="#222" textLength="27" lengthAdjust="spacingAndGlyphs">428.5</text>
<text x="211" y="677.1" font-size="12.5" text-anchor="middle" fill="#222" textLength="27" lengthAdjust="spacingAndGlyphs">429.0</text>
<text x="246.6" y="677.1" font-size="12.5" text-anchor="middle" fill="#222" textLength="27" lengthAdjust="spacingAndGlyphs">429.5</text>
<text x="282.3" y="677.1" font-size="12.5" text-anchor="middle" fill="#222" textLength="27" lengthAdjust="spacingAndGlyphs">430.0</text>
<text x="317.9" y="677.1" font-size="12.5" text-anchor="middle" fill="#222" textLength="27" lengthAdjust="spacingAndGlyphs">430.5</text>
<text x="353.5" y="677.1" font-size="12.5" text-anchor="middle" fill="#222" textLength="27" lengthAdjust="spacingAndGlyphs">431.0</text>
<text x="389.2" y="677.1" font-size="12.5" text-anchor="middle" fill="#222" textLength="27" lengthAdjust="spacingAndGlyphs">431.5</text>
<text x="424.8" y="677.1" font-size="12.5" text-anchor="middle" fill="#222" textLength="27" lengthAdjust="spacingAndGlyphs">432.0</text>
<text x="460.4" y="677.1" font-size="12.5" text-anchor="middle" fill="#222" textLength="27" lengthAdjust="spacingAndGlyphs">432.5</text>
<text x="496.1" y="677.1" font-size="12.5" text-anchor="middle" fill="#222" textLength="27" lengthAdjust="spacingAndGlyphs">433.0</text>
<text x="531.7" y="677.1" font-size="12.5" text-anchor="middle" fill="#222" textLength="27" lengthAdjust="spacingAndGlyphs">433.5</text>
<text x="567.3" y="677.1" font-size="12.5" text-anchor="middle" fill="#222" textLength="27" lengthAdjust="spacingAndGlyphs">434.0</text>
<text x="603" y="677.1" font-size="12.5" text-anchor="middle" fill="#222" textLength="27" lengthAdjust="spacingAndGlyphs">434.5</text>
<text x="638.6" y="677.1" font-size="12.5" text-anchor="middle" fill="#222" textLength="27" lengthAdjust="spacingAndGlyphs">435.0</text>
<text x="674.3" y="677.1" font-size="12.5" text-anchor="middle" fill="#222" textLength="27" lengthAdjust="spacingAndGlyphs">435.5</text>
<text x="709.9" y="677.1" font-size="12.5" text-anchor="middle" fill="#222" textLength="27" lengthAdjust="spacingAndGlyphs">436.0</text>
<text x="745.5" y="677.1" font-size="12.5" text-anchor="middle" fill="#222" textLength="27" lengthAdjust="spacingAndGlyphs">436.5</text>
<text x="781.2" y="677.1" font-size="12.5" text-anchor="middle" fill="#222" textLength="27" lengthAdjust="spacingAndGlyphs">437.0</text>
<text x="816.8" y="677.1" font-size="12.5" text-anchor="middle" fill="#222" textLength="27" lengthAdjust="spacingAndGlyphs">437.5</text>
<text x="852.4" y="677.1" font-size="12.5" text-anchor="middle" fill="#222" textLength="27" lengthAdjust="spacingAndGlyphs">438.0</text>
<text x="888.1" y="677.1" font-size="12.5" text-anchor="middle" fill="#222" textLength="27" lengthAdjust="spacingAndGlyphs">438.5</text>
<text x="500" y="690" font-size="12.5" text-anchor="middle" fill="#222" textLength="42" lengthAdjust="spacingAndGlyphs">m/z (Da)</text>
<path d="M88.5 644.2H912" stroke="#d0d0d0" stroke-width="0.8"/>
<path d="M157.3 554H300M228.3 554V644M228.3 617H370.7M300 617V641M300 641H441.7M370 642.5H560M441 643.5H752" stroke="#5f9c98" stroke-width="0.9" fill="none"/>
<path d="M560 643.6H835" stroke="#4a8a86" stroke-width="0.9" fill="none"/>
<path d="M752 643.8H905L912 646" stroke="#777" stroke-width="0.7" fill="none"/>
<path d="M220 554V644M308.7 612.3V644" stroke="#222" stroke-width="1.6"/>
<path d="M256.7 631.7V644" stroke="#333" stroke-width="1.4"/>
<path d="M281 631.7V644" stroke="#777" stroke-width="1.4"/>
<path d="M351.7 640.5V644M369.4 641V644M447 642V644M656.7 642.7V644M709.5 643V644M751.5 642.5V644M803 643V644" stroke="#333" stroke-width="1.1"/>
<text x="219" y="538.4" font-size="8.5" text-anchor="middle" fill="#2e2e72" >429.121</text>
<text x="219" y="548.8" font-size="8.5" text-anchor="middle" fill="#2e2e72" >100.00%</text>
<text x="256" y="616.4" font-size="8.5" text-anchor="middle" fill="#2e2e72" >429.641</text>
<text x="256" y="626.8" font-size="8.5" text-anchor="middle" fill="#2e2e72" >14.43%</text>
<text x="308" y="597" font-size="8.5" text-anchor="middle" fill="#2e2e72" >430.366</text>
<text x="308" y="607.4" font-size="8.5" text-anchor="middle" fill="#2e2e72" >35.27%</text>
<text x="351" y="626" font-size="8.5" text-anchor="middle" fill="#2e2e72" >430.969</text>
<text x="351" y="636.4" font-size="8.5" text-anchor="middle" fill="#2e2e72" >4.09%</text>
<text x="446.7" y="627" font-size="8.5" text-anchor="middle" fill="#2e2e72" >432.309</text>
<text x="446.7" y="637.4" font-size="8.5" text-anchor="middle" fill="#2e2e72" >2.77%</text>
<text x="656" y="628" font-size="8.5" text-anchor="middle" fill="#2e2e72" >435.257</text>
<text x="656" y="638.4" font-size="8.5" text-anchor="middle" fill="#2e2e72" >1.20%</text>
<text x="708.7" y="628" font-size="8.5" text-anchor="middle" fill="#2e2e72" >435.993</text>
<text x="708.7" y="638.4" font-size="8.5" text-anchor="middle" fill="#2e2e72" >0.93%</text>
<text x="751" y="628" font-size="8.5" text-anchor="middle" fill="#2e2e72" >436.587</text>
<text x="751" y="638.4" font-size="8.5" text-anchor="middle" fill="#2e2e72" >1.63%</text>
<text x="802.7" y="628" font-size="8.5" text-anchor="middle" fill="#2e2e72" >437.313</text>
<text x="802.7" y="638.4" font-size="8.5" text-anchor="middle" fill="#2e2e72" >0.91%</text>
<text x="897.5" y="628" font-size="8.5" text-anchor="middle" fill="#2e2e72" >438.766</text>
<text x="897.5" y="638.4" font-size="8.5" text-anchor="middle" fill="#2e2e72" >0.86%</text>
</svg>
<!-- doc scrollbar -->
<div style="position:absolute;left:938px;top:17px;width:11.5px;height:697px;background:#cdcdcf"></div>
<div style="position:absolute;left:938px;top:17px;width:11.5px;height:11px;background:#fbfbfb;border:1px solid #d6d6d8"></div>
<div style="position:absolute;left:938px;top:302.5px;width:11.5px;height:138.5px;background:#fbfbfb;border:1px solid #d4d4d6"></div>
<svg style="position:absolute;left:940.3px;top:19.6px" width="7" height="5" viewBox="0 0 7 5"><path d="M0.5 4.2L3.5 0.8L6.5 4.2z" fill="#555"/></svg>
<div style="position:absolute;left:950px;top:0;width:3px;height:714px;background:#ededef"></div>
<div style="position:absolute;left:951px;top:17px;width:1px;height:697px;background:#d9d9db"></div>
<!-- right panels -->
<div class="ptitle" style="left:953px;top:0;width:523px;height:13px"><span style="position:absolute;left:5px;top:2.1px">Molecule Match</span></div>
<svg style="position:absolute;left:1450px;top:2px" width="24" height="9" viewBox="0 0 24 9"><rect x="2.3" y="2.6" width="4" height="3.8" fill="#fff" stroke="#444" stroke-width="0.8"/><path d="M3.6 2.4V1.2h4v3.8h-1" fill="none" stroke="#444" stroke-width="0.8"/><path d="M16 1.6l4.4 4.6M20.4 1.6l-4.4 4.6" stroke="#333" stroke-width="1.1"/></svg>
<div class="tbar" style="left:953px;top:13px;width:523px;height:27.5px"></div>
<div style="position:absolute;left:1061.5px;top:14.5px;width:21.5px;height:24px;background:#bcbcbf"></div>
<svg style="position:absolute;left:963.8px;top:15.3px" width="11" height="11" viewBox="0 0 11 11"><rect x="1.2" y="0.9" width="8.6" height="9.2" rx="1" fill="#cfd6e2" stroke="#8797b4" stroke-width="0.9"/><rect x="2.6" y="3.4" width="5.8" height="5.4" fill="#fbfcfe"/><path d="M2.8 2.3h5.4" stroke="#9aa6bc" stroke-width="0.8"/><path d="M3.6 5h3.8M3.6 6.6h3.8" stroke="#c3cad6" stroke-width="0.6"/></svg><div class="tl" style="left:939.3px;top:28.7px;width:60px;color:#4e4e50">Report</div>
<svg style="position:absolute;left:990.3px;top:15.1px" width="11" height="11" viewBox="0 0 11 11"><rect x="1.2" y="0.8" width="5.8" height="6.8" fill="#e6ebf3" stroke="#8d9cb6" stroke-width="0.8"/><rect x="3.8" y="3.2" width="5.8" height="6.8" fill="#f1f4f9" stroke="#8d9cb6" stroke-width="0.8"/><path d="M5 5.4h3.4M5 7h3.4M5 8.5h2.4" stroke="#b4bfd0" stroke-width="0.6"/></svg><div class="tl" style="left:965.8px;top:28.7px;width:60px;color:#4e4e50">Copy</div>
<svg style="position:absolute;left:1029px;top:15.1px" width="12" height="11" viewBox="0 0 12 11"><path d="M3.4 1.4L7.6 1L10.2 4.2L8.8 8L4.6 8.6L1.8 5.2z" fill="#dfe9f5" stroke="#4279b4" stroke-width="1.3" stroke-linejoin="round"/><circle cx="7.3" cy="7" r="3.1" fill="#7ccb52"/><path d="M5.7 7l1.2 1.2l2-2.4" stroke="#fff" stroke-width="1.1" fill="none"/></svg><div class="tl" style="left:999.2px;top:28.7px;width:70px;color:#4e4e50;letter-spacing:-0.3px">Molecule Match</div>
<svg style="position:absolute;left:1067px;top:15.1px" width="12" height="11" viewBox="0 0 12 11"><path d="M3.4 1.4L7.6 1L10.2 4.2L8.8 8L4.6 8.6L1.8 5.2z" fill="#dfe9f5" stroke="#3b4656" stroke-width="1.3" stroke-linejoin="round"/><circle cx="7.3" cy="7" r="3.1" fill="#7ccb52"/><path d="M5.7 7l1.2 1.2l2-2.4" stroke="#fff" stroke-width="1.1" fill="none"/></svg><div class="tl" style="left:1042.3px;top:28.7px;width:60px;color:#4e4e50">View</div>
<svg style="position:absolute;left:1093.6px;top:15.1px" width="12" height="11" viewBox="0 0 12 11"><path d="M1.6 9.6L9.8 1.6" stroke="#b4c3dc" stroke-width="1.1"/><path d="M8.6 0.8l2.2 0.4l-0.4 2.2" fill="none" stroke="#b4c3dc" stroke-width="0.9"/><path d="M1.8 1.4L5.6 5.2" stroke="#a9b8d2" stroke-width="1.2"/><path d="M5.8 5.2L10 9.6" stroke="#3f7fd0" stroke-width="2" stroke-linecap="round"/></svg><div class="tl" style="left:1068.8px;top:28.7px;width:60px;color:#4e4e50">Settings</div>
<div class="tsep" style="left:1117px;top:15px;height:22px"></div>
<svg style="position:absolute;left:1126.5px;top:15.1px" width="11" height="11" viewBox="0 0 11 11"><rect x="0.9" y="1" width="9.2" height="8.8" rx="0.6" fill="#f3f5f9" stroke="#47587a" stroke-width="0.9"/><rect x="0.9" y="1" width="9.2" height="2" fill="#36435e"/><path d="M1 5.3h9M1 7.5h9M4 3v6.6M7 3v6.6" stroke="#b2bccd" stroke-width="0.6"/></svg><div class="tl" style="left:1101.4px;top:28.7px;width:60px;color:#4e4e50">Setup</div>
<div class="tbl" style="left:953.5px;top:39.8px;width:523px;height:337px">
<div class="hdr" style="left:0;top:0;width:510px;height:12.9px"></div>
<div class="hc b" style="left:0px;width:14px;text-align:center;"></div>
<div class="hc b" style="left:14px;width:78px;text-align:center;">Molecule</div>
<div class="hc b" style="left:92px;width:240px;text-align:center;">Molecule Info</div>
<div class="hc b" style="left:332px;width:37px;text-align:left;padding-left:2px;">Match</div>
<div class="hc b" style="left:369px;width:53px;text-align:center;">Match Score</div>
<div class="hc b" style="left:422px;width:37.7px;text-align:center;">Similarity</div>
<div class="hc b" style="left:459.7px;width:37.5px;text-align:center;">MS Purity</div>
<div class="hc b" style="left:497.2px;width:13px;text-align:center;"></div>
<svg style="position:absolute;left:360.5px;top:3.5px" width="6" height="4" viewBox="0 0 6 4"><path d="M0.6 3.4L3 0.8L5.4 3.4" fill="none" stroke="#888" stroke-width="0.8"/></svg>
<div class="row" style="top:12.9px;height:78px">
<div class="rh" style="height:78px;line-height:79px">1</div>
<div class="molc" style="height:77px"></div>
<div class="vl" style="left:332px;height:78px"></div>
<div class="vl" style="left:369px;height:78px"></div>
<div class="vl" style="left:422px;height:78px"></div>
<div class="vl" style="left:459.7px;height:78px"></div>
<div class="vl" style="left:497.2px;height:78px"></div>
<div class="vl" style="left:92px;height:78px"></div>
<div class="il b" style="left:96px;top:21.2px">Name:</div><div class="il" style="left:170px;top:21.2px">163322095</div>
<div class="il b" style="left:96px;top:29.3px">Label:</div><div class="il" style="left:170px;top:29.3px">PubChem_compound_text_irbesartan_records#14</div>
<div class="il b" style="left:96px;top:37.4px">Formula:</div><div class="il" style="left:168px;top:37.4px">C<sub>13</sub>H<sub>9</sub>D<sub>7</sub>N<sub>4</sub></div>
<div class="il b" style="left:96px;top:45.5px">Monoisotopic Mass:</div><div class="il" style="left:170px;top:45.5px">238.1157</div>
<svg style="position:absolute;left:334.5px;top:35px" width="10" height="8" viewBox="0 0 10 8"><path d="M1 4.2L3.6 6.8L9 1.2" fill="none" stroke="#5cb531" stroke-width="2"/></svg>
<div class="il" style="left:371.3px;top:35.8px">0.962</div>
<div class="il" style="left:424.3px;top:35.8px">0.962</div>
<div class="il" style="left:462px;top:35.8px">0.006</div>
<div class="il" style="left:499.5px;top:35.8px">4.8</div>
</div>
<div class="row sel" style="top:90.9px;height:77.5px">
<div class="rh b" style="height:77.5px;line-height:78.5px">2</div>
<div class="molc" style="height:76.5px"></div>
<div class="vl" style="left:332px;height:77.5px"></div>
<div class="vl" style="left:369px;height:77.5px"></div>
<div class="vl" style="left:422px;height:77.5px"></div>
<div class="vl" style="left:459.7px;height:77.5px"></div>
<div class="vl" style="left:497.2px;height:77.5px"></div>
<div class="vl" style="left:92px;height:77.5px"></div>
<div class="il b" style="left:96px;top:20.9px">Name:</div><div class="il" style="left:170px;top:20.9px">3749</div>
<div class="il b" style="left:96px;top:29px">Label:</div><div class="il" style="left:170px;top:29px">PubChem_compound_text_irbesartan_records#0</div>
<div class="il b" style="left:96px;top:37.1px">Formula:</div><div class="il" style="left:168px;top:37.1px">C<sub>25</sub>H<sub>28</sub>N<sub>6</sub>O</div>
<div class="il b" style="left:96px;top:45.2px">Monoisotopic Mass:</div><div class="il" style="left:170px;top:45.2px">428.2325</div>
<svg style="position:absolute;left:334.5px;top:34.8px" width="10" height="8" viewBox="0 0 10 8"><path d="M1 4.2L3.6 6.8L9 1.2" fill="none" stroke="#5cb531" stroke-width="2"/></svg>
<div class="il" style="left:371.3px;top:35.5px">0.909</div>
<div class="il" style="left:424.3px;top:35.5px">0.909</div>
<div class="il" style="left:462px;top:35.5px">0.162</div>
<div class="il" style="left:499.5px;top:35.5px">4.9</div>
</div>
<div class="row" style="top:168.4px;height:78.3px">
<div class="rh" style="height:78.3px;line-height:79.3px">3</div>
<div class="molc" style="height:77.3px"></div>
<div class="vl" style="left:332px;height:78.3px"></div>
<div class="vl" style="left:369px;height:78.3px"></div>
<div class="vl" style="left:422px;height:78.3px"></div>
<div class="vl" style="left:459.7px;height:78.3px"></div>
<div class="vl" style="left:497.2px;height:78.3px"></div>
<div class="vl" style="left:92px;height:78.3px"></div>
<div class="il b" style="left:96px;top:21.3px">Name:</div><div class="il" style="left:170px;top:21.3px">131708676</div>
<div class="il b" style="left:96px;top:29.4px">Label:</div><div class="il" style="left:170px;top:29.4px">PubChem_compound_text_irbesartan_records#8</div>
<div class="il b" style="left:96px;top:37.5px">Formula:</div><div class="il" style="left:168px;top:37.5px">C<sub>25</sub>H<sub>22</sub>D<sub>6</sub>N<sub>6</sub>O</div>
<div class="il b" style="left:96px;top:45.6px">Monoisotopic Mass:</div><div class="il" style="left:170px;top:45.6px">434.2701</div>
<svg style="position:absolute;left:334.5px;top:35.1px" width="10" height="8" viewBox="0 0 10 8"><path d="M1 4.2L3.6 6.8L9 1.2" fill="none" stroke="#5cb531" stroke-width="2"/></svg>
<div class="il" style="left:371.3px;top:35.9px">0.881</div>
<div class="il" style="left:424.3px;top:35.9px">0.881</div>
<div class="il" style="left:462px;top:35.9px">0.037</div>
<div class="il" style="left:499.5px;top:35.9px">4.8</div>
</div>
<div class="row" style="top:246.7px;height:77.8px">
<div class="rh" style="height:77.8px;line-height:78.8px">4</div>
<div class="molc" style="height:76.8px"></div>
<div class="vl" style="left:332px;height:77.8px"></div>
<div class="vl" style="left:369px;height:77.8px"></div>
<div class="vl" style="left:422px;height:77.8px"></div>
<div class="vl" style="left:459.7px;height:77.8px"></div>
<div class="vl" style="left:497.2px;height:77.8px"></div>
<div class="vl" style="left:92px;height:77.8px"></div>
<div class="il b" style="left:96px;top:21.1px">Name:</div><div class="il" style="left:170px;top:21.1px">11568906</div>
<div class="il b" style="left:96px;top:29.2px">Label:</div><div class="il" style="left:170px;top:29.2px">PubChem_compound_text_irbesartan_records#1</div>
<div class="il b" style="left:96px;top:37.3px">Formula:</div><div class="il" style="left:168px;top:37.3px">C<sub>25</sub>H<sub>29</sub>ClN<sub>6</sub>O</div>
<div class="il b" style="left:96px;top:45.4px">Monoisotopic Mass:</div><div class="il" style="left:170px;top:45.4px">464.2091</div>
<svg style="position:absolute;left:335px;top:34.9px" width="8" height="8" viewBox="0 0 8 8"><path d="M1.2 1.2l5.6 5.6M6.8 1.2l-5.6 5.6" stroke="#d9232e" stroke-width="2.2"/></svg>
<div class="il" style="left:371.3px;top:35.7px">—</div>
<div class="il" style="left:424.3px;top:35.7px">—</div>
<div class="il" style="left:462px;top:35.7px">—</div>
<div class="il" style="left:499.5px;top:35.7px">—</div>
</div>
<svg style="position:absolute;left:14px;top:12.9px" width="78" height="312" viewBox="0 0 78 312">
<path d="M21.5 18.9L15.5 22.4L9.5 19L9.5 12.1L15.5 8.6L21.5 12.1zM9.5 19l-2.9 1.7M9.5 12.1l-2.9 -1.7M15.5 8.6l-0 -3.4M21.5 12.1l2.9 -1.7M21.5 42L15.5 45.4L9.5 42L9.5 35.1L15.5 31.6L21.5 35.1zM21.5 42l2.9 1.7M9.5 42l-2.9 1.7M9.5 35.1l-2.9 -1.7M21.5 35.1l2.9 -1.7M15.5 22.4V31.6M21.5 19L35.5 26.6M27 23.2L35 27.8M28 21.6L36 25.8M15.5 45.4V54l5.5 1M15.5 54l3.5 5.5M15.5 54L8.6 57.5" fill="none" stroke="#9a9a9a" stroke-width="0.75" stroke-linecap="round"/><path d="M8.8 58L9.4 75" stroke="#9a9a9a" stroke-width="1.4" stroke-dasharray="1.1 1.5" fill="none"/>
<path d="M16.2 94.7L11.5 98.2L6.7 94.8L8.4 89.2L14.3 89.1zM11.5 98.2l0 3M6.7 94.8l-2.8 1M8.4 89.2l-1.8 -2.4M14.3 89.1l1.7 -2.5M38.4 93.2L32.5 96.6L26.6 93.2L26.6 86.4L32.5 83L38.4 86.4zM38.4 93.2l2.6 1.5M32.5 96.6l0 3M26.6 86.4l-2.6 -1.5M32.5 83l0 -3M38.4 86.4l2.6 -1.5M28.8 101.7L22.9 105.1L17 101.7L17 94.9L22.9 91.5L28.8 94.9zM22.9 105.1l0 3M17 101.7l-2.6 1.5M30.4 113.9L24.5 117.3L18.6 113.9L18.6 107.1L24.5 103.7L30.4 107.1zM30.4 113.9l2.6 1.5M18.6 113.9l-2.6 1.5M18.6 107.1l-2.6 -1.5M25.2 116.8L30 122L26.5 128.2L19.6 126.8L18.8 119.7zM26.5 128.2l1.2 2.7M19.6 126.8l-2.2 2M18.8 119.7l-2.6 -1.5M25.8 150.3L19.1 145.5L21.7 137.6L29.9 137.6L32.5 145.5zM25.8 150.3l0 3.4M19.1 145.5l-3.2 1.1M21.7 137.6l-2 -2.8M29.9 137.6l2 -2.8M32.5 145.5l3.2 1.1M16.1 95L17.5 96M21.5 128L24.5 132.5L25.8 136.5M29 127.5L30.5 133L25.8 136.5M19.5 137L31.5 148.5M32.5 137L20.5 148.5M14 135.5l6.5 -2.4M14.5 136.7l6.5 -2.4M14 118.5l3 3.5l-3.5 3M30.1 122.5L35.3 119.5L40.5 121.7L45.7 118.7L50.9 120.9L54.9 118.5M35.3 119.5l-1.2 -3.2M35.3 119.5l1.6 -3M40.5 121.7l-1.2 3.2M40.5 121.7l1.6 3M45.7 118.7l-1.2 -3.2M45.7 118.7l1.6 -3M50.9 120.9l-1.2 3.2M50.9 120.9l1.6 3M54.9 118.5l-1.2 -3.2M54.9 118.5l1.6 -3" fill="none" stroke="#9eaac2" stroke-width="0.72" stroke-linecap="round"/>
<path d="M30.1 173.5L26 178.2L19.9 176.9L17.9 171.1L22 166.4L28.1 167.7zM30.1 173.5l2.9 0.6M26 178.2l1 2.8M17.9 171.1l-2.9 -0.6M22 166.4l-1 -2.8M28.1 167.7l2 -2.2M16.6 186.5L11.8 188.8L8 184.9L10.6 180.1L15.9 181.1zM16.6 186.5l2.6 1.4M11.8 188.8l-0.6 2.9M8 184.9l-3 0.4M10.6 180.1l-1.3 -2.7M40.5 187.7L36.4 192.4L30.3 191.1L28.3 185.3L32.4 180.6L38.5 181.9zM40.5 187.7l2.9 0.6M30.3 191.1l-2 2.2M28.3 185.3l-2.9 -0.6M38.5 181.9l2 -2.2M48.2 200.5L53.1 204.1L51.3 209.9L45.1 209.9L43.3 204.1zM53.1 204.1l2.9 -0.9M51.3 209.9l1.8 2.4M45.1 209.9l-1.8 2.4M43.3 204.1l-2.9 -0.9M48.2 224.3L42.2 219.9L44.5 212.9L51.9 212.9L54.2 219.9zM48.2 224.3l0 3.2M42.2 219.9l-3 1M44.5 212.9l-1.9 -2.6M51.9 212.9l1.9 -2.6M54.2 219.9l3 1M18.5 177L16 181M27.5 178L31 181M38 192L41 196.5L46.5 200.5M48.2 210.9v1M42.5 212.5L53 222.5M54 212.5L43.5 222.5M39 210l4 -1.5M51.6 199L56.2 196L60.8 198.2L65.4 195.2L70 197.4L73.6 195M56.2 196l-1.2 -3.2M56.2 196l1.6 -3M60.8 198.2l-1.2 3.2M60.8 198.2l1.6 3M65.4 195.2l-1.2 -3.2M65.4 195.2l1.6 -3M70 197.4l-1.2 3.2M70 197.4l1.6 3M73.6 195l-1.2 -3.2M73.6 195l1.6 -3" fill="none" stroke="#c2c2c2" stroke-width="0.7" stroke-linecap="round"/>
<path d="M16.2 250.5L11.5 254L6.7 250.6L8.4 245L14.3 244.9zM11.5 254l0 3M6.7 250.6l-2.8 1M8.4 245l-1.8 -2.4M14.3 244.9l1.7 -2.5M38.4 249L32.5 252.4L26.6 249L26.6 242.2L32.5 238.8L38.4 242.2zM38.4 249l2.6 1.5M32.5 252.4l0 3M26.6 242.2l-2.6 -1.5M32.5 238.8l0 -3M38.4 242.2l2.6 -1.5M28.8 257.5L22.9 260.9L17 257.5L17 250.7L22.9 247.3L28.8 250.7zM22.9 260.9l0 3M17 257.5l-2.6 1.5M30.4 269.7L24.5 273.1L18.6 269.7L18.6 262.9L24.5 259.5L30.4 262.9zM30.4 269.7l2.6 1.5M18.6 269.7l-2.6 1.5M18.6 262.9l-2.6 -1.5M25.2 272.6L30 277.8L26.5 284L19.6 282.6L18.8 275.5zM26.5 284l1.2 2.7M19.6 282.6l-2.2 2M18.8 275.5l-2.6 -1.5M25.8 306.1L19.1 301.3L21.7 293.4L29.9 293.4L32.5 301.3zM25.8 306.1l0 3.4M19.1 301.3l-3.2 1.1M21.7 293.4l-2 -2.8M29.9 293.4l2 -2.8M32.5 301.3l3.2 1.1M16.1 250.8L17.5 251.8M21.5 283.8L24.5 288.3L25.8 292.3M29 283.3L30.5 288.8L25.8 292.3M19.5 292.8L31.5 304.3M32.5 292.8L20.5 304.3M14 291.3l6.5 -2.4M14.5 292.5l6.5 -2.4M14 274.3l3 3.5l-3.5 3M30.1 278.3L35.3 275.3L40.5 277.5L45.7 274.5L50.9 276.7L54.9 274.3M35.3 275.3l-1.2 -3.2M35.3 275.3l1.6 -3M40.5 277.5l-1.2 3.2M40.5 277.5l1.6 3M45.7 274.5l-1.2 -3.2M45.7 274.5l1.6 -3M50.9 276.7l-1.2 3.2M50.9 276.7l1.6 3M54.9 274.3l-1.2 -3.2M54.9 274.3l1.6 -3M66.5 274.8h8M67 272.8v4" fill="none" stroke="#adadad" stroke-width="0.7" stroke-linecap="round"/>
</svg>
<div class="sb" style="left:509.6px;top:0.5px;width:11.4px;height:324px"></div>
<div class="sbw" style="left:509.6px;top:0.5px;width:11.4px;height:42px"></div>
<div class="sbw" style="left:509.6px;top:314px;width:11.4px;height:10.5px"></div>
<svg style="position:absolute;left:511.3px;top:4px" width="7" height="5" viewBox="0 0 7 5"><path d="M0.5 4.2L3.5 0.8L6.5 4.2z" fill="#555"/></svg>
<svg style="position:absolute;left:511.3px;top:317px" width="7" height="5" viewBox="0 0 7 5"><path d="M0.5 0.8L3.5 4.2L6.5 0.8z" fill="#555"/></svg>
<div style="position:absolute;left:509.4px;top:12px;width:10.5px;height:0.8px;background:#d8d8d8"></div>
<div class="sb" style="left:0;top:324.5px;width:510px;height:11px"></div>
<div class="sbw" style="left:0;top:324.5px;width:359.5px;height:11px"></div>
<div class="sbw" style="left:499px;top:324.5px;width:11px;height:11px"></div>
<div class="sbw" style="left:509.4px;top:324.5px;width:10.5px;height:11px;background:#f0f0f0"></div>
<div style="position:absolute;left:10.3px;top:325px;width:0.8px;height:10px;background:#cfcfcf"></div>
<svg style="position:absolute;left:3px;top:326.5px" width="5" height="7" viewBox="0 0 5 7"><path d="M4.2 0.5L0.8 3.5L4.2 6.5z" fill="#555"/></svg>
<svg style="position:absolute;left:502.5px;top:326.5px" width="5" height="7" viewBox="0 0 5 7"><path d="M0.8 0.5L4.2 3.5L0.8 6.5z" fill="#555"/></svg>
</div>
<div style="position:absolute;left:953px;top:377px;width:523px;height:2px;background:#c9c9cb"></div>
<div class="ptitle" style="left:953px;top:379px;width:523px;height:14px"><span style="position:absolute;left:5px;top:3.2px">Compounds</span></div>
<svg style="position:absolute;left:1450px;top:382px" width="24" height="9" viewBox="0 0 24 9"><rect x="2.3" y="2.6" width="4" height="3.8" fill="#fff" stroke="#444" stroke-width="0.8"/><path d="M3.6 2.4V1.2h4v3.8h-1" fill="none" stroke="#444" stroke-width="0.8"/><path d="M16 1.6l4.4 4.6M20.4 1.6l-4.4 4.6" stroke="#333" stroke-width="1.1"/></svg>
<div class="tbar" style="left:953px;top:393px;width:523px;height:27.5px"></div>
<svg style="position:absolute;left:963.8px;top:395.2px" width="11" height="11" viewBox="0 0 11 11"><rect x="1.2" y="0.9" width="8.6" height="9.2" rx="1" fill="#cfd6e2" stroke="#8797b4" stroke-width="0.9"/><rect x="2.6" y="3.4" width="5.8" height="5.4" fill="#fbfcfe"/><path d="M2.8 2.3h5.4" stroke="#9aa6bc" stroke-width="0.8"/><path d="M3.6 5h3.8M3.6 6.6h3.8" stroke="#c3cad6" stroke-width="0.6"/></svg><div class="tl" style="left:939.3px;top:408.5px;width:60px;color:#4e4e50">Report</div>
<div class="tsep" style="left:985.5px;top:396px;height:21px"></div>
<svg style="position:absolute;left:992px;top:395.1px" width="12" height="11" viewBox="0 0 12 11"><path d="M2.6 3.6L5.2 2L7.8 3.6V7.6L5.2 9.4L2.6 7.6z" fill="#f4f6fa" stroke="#4a4f5c" stroke-width="0.9" stroke-linejoin="round"/><path d="M5.2 2.2v7" stroke="#8d94a3" stroke-width="0.6"/><path d="M8.6 0.3l0.8 1.6l1.7 0.2l-1.2 1.2l0.3 1.7l-1.6-0.8l-1.5 0.8l0.3-1.7l-1.2-1.2l1.7-0.2z" fill="#d2203a"/></svg><div class="tl" style="left:967.6px;top:408.5px;width:60px;color:#4e4e50">Add</div>
<svg style="position:absolute;left:1016.3px;top:395.6px" width="10" height="10" viewBox="0 0 10 10"><path d="M2 2l6 6M8 2l-6 6" stroke="#8c8c92" stroke-width="2.2"/></svg><div class="tl" style="left:991px;top:408.5px;width:60px;color:#c2c2c6">Delete</div>
<div class="tsep" style="left:1037.5px;top:396px;height:21px"></div>
<svg style="position:absolute;left:1045.9px;top:395.1px" width="11" height="11" viewBox="0 0 11 11"><rect x="0.9" y="1" width="9.2" height="8.8" rx="0.6" fill="#f3f5f9" stroke="#47587a" stroke-width="0.9"/><rect x="0.9" y="1" width="9.2" height="2" fill="#36435e"/><path d="M1 5.3h9M1 7.5h9M4 3v6.6M7 3v6.6" stroke="#b2bccd" stroke-width="0.6"/></svg><div class="tl" style="left:1021.3px;top:408.5px;width:60px;color:#4e4e50">Setup</div>
<div class="tsep" style="left:1066.5px;top:396px;height:21px"></div>
<svg style="position:absolute;left:1090.4px;top:395.1px" width="10" height="11" viewBox="0 0 10 11"><rect x="1.5" y="1" width="7" height="9" rx="0.8" fill="#f5f5f7" stroke="#d6d6da" stroke-width="0.8"/><path d="M3.2 3.6h3.6M3.2 5.4h3.6M3.2 7.2h2.4" stroke="#dcdce0" stroke-width="0.7"/></svg><div class="tl" style="left:1059.8px;top:408.5px;width:70px;color:#c2c2c6;letter-spacing:-0.28px">Graphical Props</div>
<div class="tsep" style="left:1124px;top:396px;height:21px"></div>
<svg style="position:absolute;left:1132.2px;top:394.9px" width="11" height="11" viewBox="0 0 11 11"><path d="M2 6.6A3.6 3.6 0 0 1 8 2.9" fill="none" stroke="#8ccb4a" stroke-width="1.5"/><path d="M9 4.4A3.6 3.6 0 0 1 3 8.1" fill="none" stroke="#8ccb4a" stroke-width="1.5"/><path d="M6.7 0.9l3 1.1l-2.1 2.4z" fill="#8ccb4a"/><path d="M4.3 10.1l-3-1.1l2.1-2.4z" fill="#8ccb4a"/></svg><div class="tl" style="left:1107.8px;top:408.5px;width:60px;color:#4e4e50">RDKit</div>
<div class="tbl" style="left:953.5px;top:419.7px;width:523px;height:296px;border-bottom:0">
<div class="hdr" style="left:0;top:0;width:510px;height:12.9px"></div>
<div class="hc" style="left:14px;width:141px;text-align:left;padding-left:2px">Molecule</div>
<div class="hc" style="left:155px;width:352px;text-align:left;padding-left:2px">Properties</div>
<div class="hc" style="left:0;width:14px"></div>
<div class="row" style="top:12.9px;height:78.3px;width:504.5px">
<div class="rh" style="height:78.3px;line-height:79.3px">1</div>
<div class="vl" style="left:155px;height:78.3px"></div>
<div class="il b" style="left:159px;top:0.4px">Molecular Formula:</div><div class="il" style="left:331.5px;top:0.4px">C<sub>25</sub>H<sub>28</sub>N<sub>6</sub>O</div>
<div class="il b" style="left:159px;top:8.5px">Average Mass:</div><div class="il" style="left:333.3px;top:8.5px">428.53</div>
<div class="il b" style="left:159px;top:16.6px">Monoisotopic Mass:</div><div class="il" style="left:333.3px;top:16.6px">428.23</div>
<div class="il b" style="left:159px;top:24.7px">Name:</div><div class="il" style="left:333.3px;top:24.7px">3749</div>
<div class="il b" style="left:159px;top:32.8px">Label:</div><div class="il" style="left:333.3px;top:32.8px">PubChem_compound_text_irbesartan_records#0</div>
<div class="il b" style="left:159px;top:40.9px">Molecular Composition:</div><div class="il w" style="left:333.3px;top:40.9px">C:70.07% H:6.59% N:19.61% O:3.73%</div>
<div class="il b" style="left:159px;top:49px">DBE:</div><div class="il" style="left:333.3px;top:49px">15</div>
<div class="il b u" style="left:159px;top:57.1px">PUBCHEM_ATOM_DEF_STEREO_COUNT:</div><div class="il" style="left:333.3px;top:57.1px">0</div>
<div class="il b u" style="left:159px;top:65.2px">PUBCHEM_ATOM_UDEF_STEREO_COUNT:</div><div class="il" style="left:333.3px;top:65.2px">0</div>
</div>
<div class="row" style="top:91.2px;height:77.6px;width:504.5px">
<div class="rh" style="height:77.6px;line-height:78.6px">2</div>
<div class="vl" style="left:155px;height:77.6px"></div>
<div class="il b" style="left:159px;top:0.4px">Molecular Formula:</div><div class="il" style="left:331.5px;top:0.4px">C<sub>25</sub>H<sub>29</sub>ClN<sub>6</sub>O</div>
<div class="il b" style="left:159px;top:8.5px">Average Mass:</div><div class="il" style="left:333.3px;top:8.5px">464.99</div>
<div class="il b" style="left:159px;top:16.6px">Monoisotopic Mass:</div><div class="il" style="left:333.3px;top:16.6px">464.21</div>
<div class="il b" style="left:159px;top:24.7px">Name:</div><div class="il" style="left:333.3px;top:24.7px">11568906</div>
<div class="il b" style="left:159px;top:32.8px">Label:</div><div class="il" style="left:333.3px;top:32.8px">PubChem_compound_text_irbesartan_records#1</div>
<div class="il b" style="left:159px;top:40.9px">Molecular Composition:</div><div class="il w" style="left:333.3px;top:40.9px">C:64.57% H:6.29% Cl:7.62% N:18.07% O:3.44%</div>
<div class="il b" style="left:159px;top:49px">DBE:</div><div class="il" style="left:333.3px;top:49px">14</div>
<div class="il b u" style="left:159px;top:57.1px">PUBCHEM_ATOM_DEF_STEREO_COUNT:</div><div class="il" style="left:333.3px;top:57.1px">0</div>
<div class="il b u" style="left:159px;top:65.2px">PUBCHEM_ATOM_UDEF_STEREO_COUNT:</div><div class="il" style="left:333.3px;top:65.2px">0</div>
</div>
<div class="row" style="top:168.8px;height:78px;width:504.5px">
<div class="rh" style="height:78px;line-height:79px">3</div>
<div class="vl" style="left:155px;height:78px"></div>
<div class="il b" style="left:159px;top:0.4px">Molecular Formula:</div><div class="il" style="left:331.5px;top:0.4px">C<sub>25</sub>H<sub>28</sub>N<sub>6</sub>O<sub>2</sub></div>
<div class="il b" style="left:159px;top:8.5px">Average Mass:</div><div class="il" style="left:333.3px;top:8.5px">444.53</div>
<div class="il b" style="left:159px;top:16.6px">Monoisotopic Mass:</div><div class="il" style="left:333.3px;top:16.6px">444.23</div>
<div class="il b" style="left:159px;top:24.7px">Name:</div><div class="il" style="left:333.3px;top:24.7px">101944494</div>
<div class="il b" style="left:159px;top:32.8px">Label:</div><div class="il" style="left:333.3px;top:32.8px">PubChem_compound_text_irbesartan_records#2</div>
<div class="il b" style="left:159px;top:40.9px">Molecular Composition:</div><div class="il w" style="left:333.3px;top:40.9px">C:67.55% H:6.35% N:18.91% O:7.20%</div>
<div class="il b" style="left:159px;top:49px">DBE:</div><div class="il" style="left:333.3px;top:49px">15</div>
<div class="il b u" style="left:159px;top:57.1px">PUBCHEM_ATOM_DEF_STEREO_COUNT:</div><div class="il" style="left:333.3px;top:57.1px">0</div>
<div class="il b u" style="left:159px;top:65.2px">PUBCHEM_ATOM_UDEF_STEREO_COUNT:</div><div class="il" style="left:333.3px;top:65.2px">2</div>
</div>
<div class="row" style="top:246.8px;height:77.9px;width:504.5px">
<div class="rh" style="height:77.9px;line-height:78.9px">4</div>
<div class="vl" style="left:155px;height:77.9px"></div>
<div class="il b" style="left:159px;top:0.4px">Molecular Formula:</div><div class="il" style="left:331.5px;top:0.4px">C<sub>25</sub>H<sub>28</sub>N<sub>6</sub>O<sub>2</sub></div>
<div class="il b" style="left:159px;top:8.5px">Average Mass:</div><div class="il" style="left:333.3px;top:8.5px">444.53</div>
<div class="il b" style="left:159px;top:16.6px">Monoisotopic Mass:</div><div class="il" style="left:333.3px;top:16.6px">444.23</div>
<div class="il b" style="left:159px;top:24.7px">Name:</div><div class="il" style="left:333.3px;top:24.7px">154700101</div>
<div class="il b" style="left:159px;top:32.8px">Label:</div><div class="il" style="left:333.3px;top:32.8px">PubChem_compound_text_irbesartan_records#3</div>
<div class="il b" style="left:159px;top:40.9px">Molecular Composition:</div><div class="il w" style="left:333.3px;top:40.9px">C:67.55% H:6.35% N:18.91% O:7.20%</div>
<div class="il b" style="left:159px;top:49px">DBE:</div><div class="il" style="left:333.3px;top:49px">15</div>
<div class="il b u" style="left:159px;top:57.1px">PUBCHEM_ATOM_DEF_STEREO_COUNT:</div><div class="il" style="left:333.3px;top:57.1px">0</div>
<div class="il b u" style="left:159px;top:65.2px">PUBCHEM_ATOM_UDEF_STEREO_COUNT:</div><div class="il" style="left:333.3px;top:65.2px">0</div>
</div>
<svg style="position:absolute;left:14px;top:12.8px" width="141" height="283" viewBox="0 0 141 283">
<path d="M16.2 17.2L11.5 20.7L6.7 17.3L8.4 11.7L14.3 11.6zM11.5 20.7l0 3M6.7 17.3l-2.8 1M8.4 11.7l-1.8 -2.4M14.3 11.6l1.7 -2.5M38.4 15.7L32.5 19.1L26.6 15.7L26.6 8.9L32.5 5.5L38.4 8.9zM38.4 15.7l2.6 1.5M32.5 19.1l0 3M26.6 8.9l-2.6 -1.5M32.5 5.5l0 -3M38.4 8.9l2.6 -1.5M28.8 24.2L22.9 27.6L17 24.2L17 17.4L22.9 14L28.8 17.4zM22.9 27.6l0 3M17 24.2l-2.6 1.5M30.4 36.4L24.5 39.8L18.6 36.4L18.6 29.6L24.5 26.2L30.4 29.6zM30.4 36.4l2.6 1.5M18.6 36.4l-2.6 1.5M18.6 29.6l-2.6 -1.5M25.2 39.3L30 44.5L26.5 50.7L19.6 49.3L18.8 42.2zM26.5 50.7l1.2 2.7M19.6 49.3l-2.2 2M18.8 42.2l-2.6 -1.5M25.8 72.8L19.1 68L21.7 60.1L29.9 60.1L32.5 68zM25.8 72.8l0 3.4M19.1 68l-3.2 1.1M21.7 60.1l-2 -2.8M29.9 60.1l2 -2.8M32.5 68l3.2 1.1M16.1 17.5L17.5 18.5M21.5 50.5L24.5 55L25.8 59M29 50L30.5 55.5L25.8 59M19.5 59.5L31.5 71M32.5 59.5L20.5 71M14 58l6.5 -2.4M14.5 59.2l6.5 -2.4M14 41l3 3.5l-3.5 3M30.1 45L35.3 42L40.5 44.2L45.7 41.2L50.9 43.4L54.9 41M35.3 42l-1.2 -3.2M35.3 42l1.6 -3M40.5 44.2l-1.2 3.2M40.5 44.2l1.6 3M45.7 41.2l-1.2 -3.2M45.7 41.2l1.6 -3M50.9 43.4l-1.2 3.2M50.9 43.4l1.6 3M54.9 41l-1.2 -3.2M54.9 41l1.6 -3" fill="none" stroke="#b4b4b4" stroke-width="0.7" stroke-linecap="round"/>
<path d="M16.2 95.2L11.5 98.7L6.7 95.3L8.4 89.7L14.3 89.6zM11.5 98.7l0 3M6.7 95.3l-2.8 1M8.4 89.7l-1.8 -2.4M14.3 89.6l1.7 -2.5M38.4 93.7L32.5 97.1L26.6 93.7L26.6 86.9L32.5 83.5L38.4 86.9zM38.4 93.7l2.6 1.5M32.5 97.1l0 3M26.6 86.9l-2.6 -1.5M32.5 83.5l0 -3M38.4 86.9l2.6 -1.5M28.8 102.2L22.9 105.6L17 102.2L17 95.4L22.9 92L28.8 95.4zM22.9 105.6l0 3M17 102.2l-2.6 1.5M30.4 114.4L24.5 117.8L18.6 114.4L18.6 107.6L24.5 104.2L30.4 107.6zM30.4 114.4l2.6 1.5M18.6 114.4l-2.6 1.5M18.6 107.6l-2.6 -1.5M25.2 117.3L30 122.5L26.5 128.7L19.6 127.3L18.8 120.2zM26.5 128.7l1.2 2.7M19.6 127.3l-2.2 2M18.8 120.2l-2.6 -1.5M25.8 150.8L19.1 146L21.7 138.1L29.9 138.1L32.5 146zM25.8 150.8l0 3.4M19.1 146l-3.2 1.1M21.7 138.1l-2 -2.8M29.9 138.1l2 -2.8M32.5 146l3.2 1.1M16.1 95.5L17.5 96.5M21.5 128.5L24.5 133L25.8 137M29 128L30.5 133.5L25.8 137M19.5 137.5L31.5 149M32.5 137.5L20.5 149M14 136l6.5 -2.4M14.5 137.2l6.5 -2.4M14 119l3 3.5l-3.5 3M30.1 123L35.3 120L40.5 122.2L45.7 119.2L50.9 121.4L54.9 119M35.3 120l-1.2 -3.2M35.3 120l1.6 -3M40.5 122.2l-1.2 3.2M40.5 122.2l1.6 3M45.7 119.2l-1.2 -3.2M45.7 119.2l1.6 -3M50.9 121.4l-1.2 3.2M50.9 121.4l1.6 3M54.9 119l-1.2 -3.2M54.9 119l1.6 -3M66.5 119.5h8M67 117.5v4" fill="none" stroke="#b4b4b4" stroke-width="0.7" stroke-linecap="round"/>
<path d="M16.2 173L11.5 176.5L6.7 173.1L8.4 167.5L14.3 167.4zM11.5 176.5l0 3M6.7 173.1l-2.8 1M8.4 167.5l-1.8 -2.4M14.3 167.4l1.7 -2.5M38.4 171.5L32.5 174.9L26.6 171.5L26.6 164.7L32.5 161.3L38.4 164.7zM38.4 171.5l2.6 1.5M32.5 174.9l0 3M26.6 164.7l-2.6 -1.5M32.5 161.3l0 -3M38.4 164.7l2.6 -1.5M28.8 180L22.9 183.4L17 180L17 173.2L22.9 169.8L28.8 173.2zM22.9 183.4l0 3M17 180l-2.6 1.5M30.4 192.2L24.5 195.6L18.6 192.2L18.6 185.4L24.5 182L30.4 185.4zM30.4 192.2l2.6 1.5M18.6 192.2l-2.6 1.5M18.6 185.4l-2.6 -1.5M25.2 195.1L30 200.3L26.5 206.5L19.6 205.1L18.8 198zM26.5 206.5l1.2 2.7M19.6 205.1l-2.2 2M18.8 198l-2.6 -1.5M25.8 228.6L19.1 223.8L21.7 215.9L29.9 215.9L32.5 223.8zM25.8 228.6l0 3.4M19.1 223.8l-3.2 1.1M21.7 215.9l-2 -2.8M29.9 215.9l2 -2.8M32.5 223.8l3.2 1.1M16.1 173.3L17.5 174.3M21.5 206.3L24.5 210.8L25.8 214.8M29 205.8L30.5 211.3L25.8 214.8M19.5 215.3L31.5 226.8M32.5 215.3L20.5 226.8M14 213.8l6.5 -2.4M14.5 215l6.5 -2.4M14 196.8l3 3.5l-3.5 3M30.1 200.8L35.3 197.8L40.5 200L45.7 197L50.9 199.2L54.9 196.8M35.3 197.8l-1.2 -3.2M35.3 197.8l1.6 -3M40.5 200l-1.2 3.2M40.5 200l1.6 3M45.7 197l-1.2 -3.2M45.7 197l1.6 -3M50.9 199.2l-1.2 3.2M50.9 199.2l1.6 3M54.9 196.8l-1.2 -3.2M54.9 196.8l1.6 -3" fill="none" stroke="#b8b8b8" stroke-width="0.7" stroke-linecap="round"/>
<path d="M16.2 250.8L11.5 254.3L6.7 250.9L8.4 245.3L14.3 245.2zM11.5 254.3l0 3M6.7 250.9l-2.8 1M8.4 245.3l-1.8 -2.4M14.3 245.2l1.7 -2.5M38.4 249.3L32.5 252.7L26.6 249.3L26.6 242.5L32.5 239.1L38.4 242.5zM38.4 249.3l2.6 1.5M32.5 252.7l0 3M26.6 242.5l-2.6 -1.5M32.5 239.1l0 -3M38.4 242.5l2.6 -1.5M28.8 257.8L22.9 261.2L17 257.8L17 251L22.9 247.6L28.8 251zM22.9 261.2l0 3M17 257.8l-2.6 1.5M30.4 270L24.5 273.4L18.6 270L18.6 263.2L24.5 259.8L30.4 263.2zM30.4 270l2.6 1.5M18.6 270l-2.6 1.5M18.6 263.2l-2.6 -1.5M25.2 272.9L30 278.1L26.5 284.3L19.6 282.9L18.8 275.8zM26.5 284.3l1.2 2.7M19.6 282.9l-2.2 2M18.8 275.8l-2.6 -1.5M25.8 306.4L19.1 301.6L21.7 293.7L29.9 293.7L32.5 301.6zM25.8 306.4l0 3.4M19.1 301.6l-3.2 1.1M21.7 293.7l-2 -2.8M29.9 293.7l2 -2.8M32.5 301.6l3.2 1.1M16.1 251.1L17.5 252.1M21.5 284.1L24.5 288.6L25.8 292.6M29 283.6L30.5 289.1L25.8 292.6M19.5 293.1L31.5 304.6M32.5 293.1L20.5 304.6M14 291.6l6.5 -2.4M14.5 292.8l6.5 -2.4M14 274.6l3 3.5l-3.5 3M30.1 278.6L35.3 275.6L40.5 277.8L45.7 274.8L50.9 277L54.9 274.6M35.3 275.6l-1.2 -3.2M35.3 275.6l1.6 -3M40.5 277.8l-1.2 3.2M40.5 277.8l1.6 3M45.7 274.8l-1.2 -3.2M45.7 274.8l1.6 -3M50.9 277l-1.2 3.2M50.9 277l1.6 3M54.9 274.6l-1.2 -3.2M54.9 274.6l1.6 -3" fill="none" stroke="#b4b4b4" stroke-width="0.7" stroke-linecap="round"/>
</svg>
<div class="sb" style="left:509.6px;top:0.5px;width:11.4px;height:296px"></div>
<div class="sbw" style="left:509.6px;top:0.5px;width:11.4px;height:44px"></div>
<svg style="position:absolute;left:511.3px;top:4px" width="7" height="5" viewBox="0 0 7 5"><path d="M0.5 4.2L3.5 0.8L6.5 4.2z" fill="#555"/></svg>
<div style="position:absolute;left:509.4px;top:12px;width:10.5px;height:0.8px;background:#d8d8d8"></div>
</div>
<svg id="strip" style="position:absolute;left:1476px;top:0" width="24" height="714" viewBox="0 0 24 714">
<rect x="0" y="0" width="24" height="714" fill="#efeff1"/>
<path d="M3 2.8h17" stroke="#555" stroke-width="1.2" stroke-dasharray="1.1 1"/>
<circle cx="9" cy="11.5" r="2.3" fill="#dbe8f8" stroke="#7fa6d8" stroke-width="0.9"/><path d="M11 13.5l3.5 3.5" stroke="#a0304a" stroke-width="1.3"/>
<path d="M11.5 10.3h4.4M13.7 8.1v4.4" stroke="#c8202e" stroke-width="1.4"/>
<circle cx="9" cy="25.5" r="2.3" fill="#dbe8f8" stroke="#7fa6d8" stroke-width="0.9"/><path d="M11 27.5l3.5 3.5" stroke="#a0304a" stroke-width="1.3"/>
<path d="M11.5 24.3h4.4" stroke="#c8202e" stroke-width="1.4"/>
<circle cx="9" cy="39" r="2.3" fill="#dbe8f8" stroke="#7fa6d8" stroke-width="0.9"/><path d="M11 41l3.5 3.5" stroke="#a0304a" stroke-width="1.3"/>
<path d="M6.5 42.5h5M9 40v5" stroke="#c8202e" stroke-width="0.9" stroke-dasharray="1 0.8"/>
<circle cx="9" cy="52.5" r="2.3" fill="#dbe8f8" stroke="#7fa6d8" stroke-width="0.9"/><path d="M11 54.5l3.5 3.5" stroke="#a0304a" stroke-width="1.3"/>
<path d="M16.5 52l-3 2.2l3 2.2z" fill="#c8202e"/>
<circle cx="10" cy="66" r="3.2" fill="#f7d9c2" stroke="#e08040" stroke-width="1.2"/><path d="M10.5 70.5h5M13 68v5" stroke="#d8222e" stroke-width="1.5"/>
<rect x="7" y="77.5" width="8" height="8.5" fill="#f5f5f7" stroke="#b5bac4" stroke-width="0.9"/><path d="M9 80h4M9 82.5h4" stroke="#c0c4cc" stroke-width="0.7"/><circle cx="11" cy="77.5" r="1.3" fill="#c8ccd4"/>
<path d="M5 90.5h14" stroke="#dcdcde" stroke-width="1"/>
<path d="M7 103.5C10 103 10.3 96 11.5 96C12.7 96 13 103 16 103.5" fill="none" stroke="#6a2a38" stroke-width="1"/>
<path d="M6 100.5l3-2v4zM17 100.5l-3-2v4z" fill="#c8202e"/><circle cx="11.5" cy="94.5" r="1.4" fill="#7fa6d8"/>
<path d="M7 118C10 117.5 10.3 110.5 11.5 110.5C12.7 110.5 13 117.5 16 118" fill="none" stroke="#b8b8bc" stroke-width="1"/>
<path d="M9 114l2.5-3l2.5 3" fill="none" stroke="#c4c4c8" stroke-width="0.8"/>
<path d="M5 122.5h14" stroke="#e6e6e8" stroke-width="1"/>
<path d="M6 134.5h11M8 134.5v-4M10.3 134.5v-7M12.6 134.5v-5M15.5 134.5v-9" stroke="#7a2a3a" stroke-width="0.9" fill="none"/>
<path d="M6 149h11M8 149v-3M10.3 149v-6M12.6 149v-4M15.5 149v-7" stroke="#b4b4b8" stroke-width="0.9" fill="none"/>
<path d="M7 161.7C9.7 161.2 9.9 154.9 11 154.9C12.1 154.9 12.3 161.2 15.1 161.7" fill="none" stroke="#333" stroke-width="0.9"/>
<path d="M12.5 152.5v4.5" stroke="#c8202e" stroke-width="1.2"/><path d="M10.5 154l2-2.6l2 2.6z" fill="#c8202e"/><path d="M8.5 161.5h5" stroke="#3aa04a" stroke-width="0.9"/>
<path d="M7 177.2C9.7 176.7 9.9 170.4 11 170.4C12.1 170.4 12.3 176.7 15.1 177.2" fill="none" stroke="#333" stroke-width="0.9"/>
<path d="M12.5 167.5v3.5" stroke="#c8202e" stroke-width="1.2"/><path d="M10.5 170l2 2.6l2-2.6z" fill="#c8202e"/>
<path d="M6.5 188.7h10M11.5 183.7v10" stroke="#b4b4b8" stroke-width="1.1"/>
<path d="M6.5 209.2C9.2 208.7 9.4 202.4 10.5 202.4C11.6 202.4 11.8 208.7 14.6 209.2" fill="none" stroke="#333" stroke-width="0.9"/>
<path d="M4.5 203.5l3 3M7.5 203.5l-3 3" stroke="#c8202e" stroke-width="1"/><path d="M5 209l2.2-2" stroke="#c8202e" stroke-width="0.9"/><path d="M15.5 205h3.4l-1.7 2z" fill="#444"/>
<rect x="4.5" y="215" width="9" height="8" fill="#f2f2f4" stroke="#6a2a38" stroke-width="0.8"/><path d="M5.5 222.5l2-5l1.6 3l1.6-4.6l1.8 6.6z" fill="#5a2030"/><path d="M15.5 219h3.4l-1.7 2z" fill="#444"/>
<rect x="5" y="232" width="8" height="8.5" fill="#ededf0" stroke="#b8bcc4" stroke-width="0.9"/><path d="M6.5 239l5-5.5" stroke="#b8bcc4" stroke-width="0.9"/><path d="M15.5 236h3.4l-1.7 2z" fill="#c4c4c8"/>
<rect x="4.5" y="247.5" width="9" height="8.5" fill="#6f86b8" stroke="#4d628e" stroke-width="0.8"/><rect x="6.2" y="246" width="5.6" height="2" fill="#8a9cc4"/><circle cx="9" cy="252" r="1.8" fill="#f4c020"/><path d="M15.5 251h3.4l-1.7 2z" fill="#444"/>
<path d="M7.5 265.5l4-2l4 2v5l-4 2l-4-2z" fill="#e4e4e7" stroke="#c0c0c4" stroke-width="0.8"/><path d="M7.5 265.5l4 2l4-2M11.5 267.5v5" fill="none" stroke="#c0c0c4" stroke-width="0.7"/>
<path d="M7 277.3h9" stroke="#b0b0b4" stroke-width="1"/><path d="M7 285l4.5-5.5l4.5 5.5z" fill="#a4a4a8"/>
<path d="M7 298.5l4.5-5.5l4.5 5.5z" fill="#a4a4a8"/>
<path d="M7 306.5l4.5 5.5l4.5-5.5z" fill="#a4a4a8"/>
<path d="M7 319.5l4.5 5.5l4.5-5.5z" fill="#a4a4a8"/><path d="M7 327h9" stroke="#b0b0b4" stroke-width="1"/>
<rect x="5" y="333" width="7" height="8" fill="#dcdce0" stroke="#bfc3cb" stroke-width="0.8"/><path d="M6.5 333v-1.5h4v1.5" stroke="#bfc3cb" stroke-width="0.8" fill="none"/><path d="M7.5 338.5h5v3h-5z" fill="#ececf0" stroke="#c8ccd2" stroke-width="0.6"/><path d="M15.5 336h3l-1.5 1.8z" fill="#c8c8cc"/>
</svg>
</div>
</body></html>
